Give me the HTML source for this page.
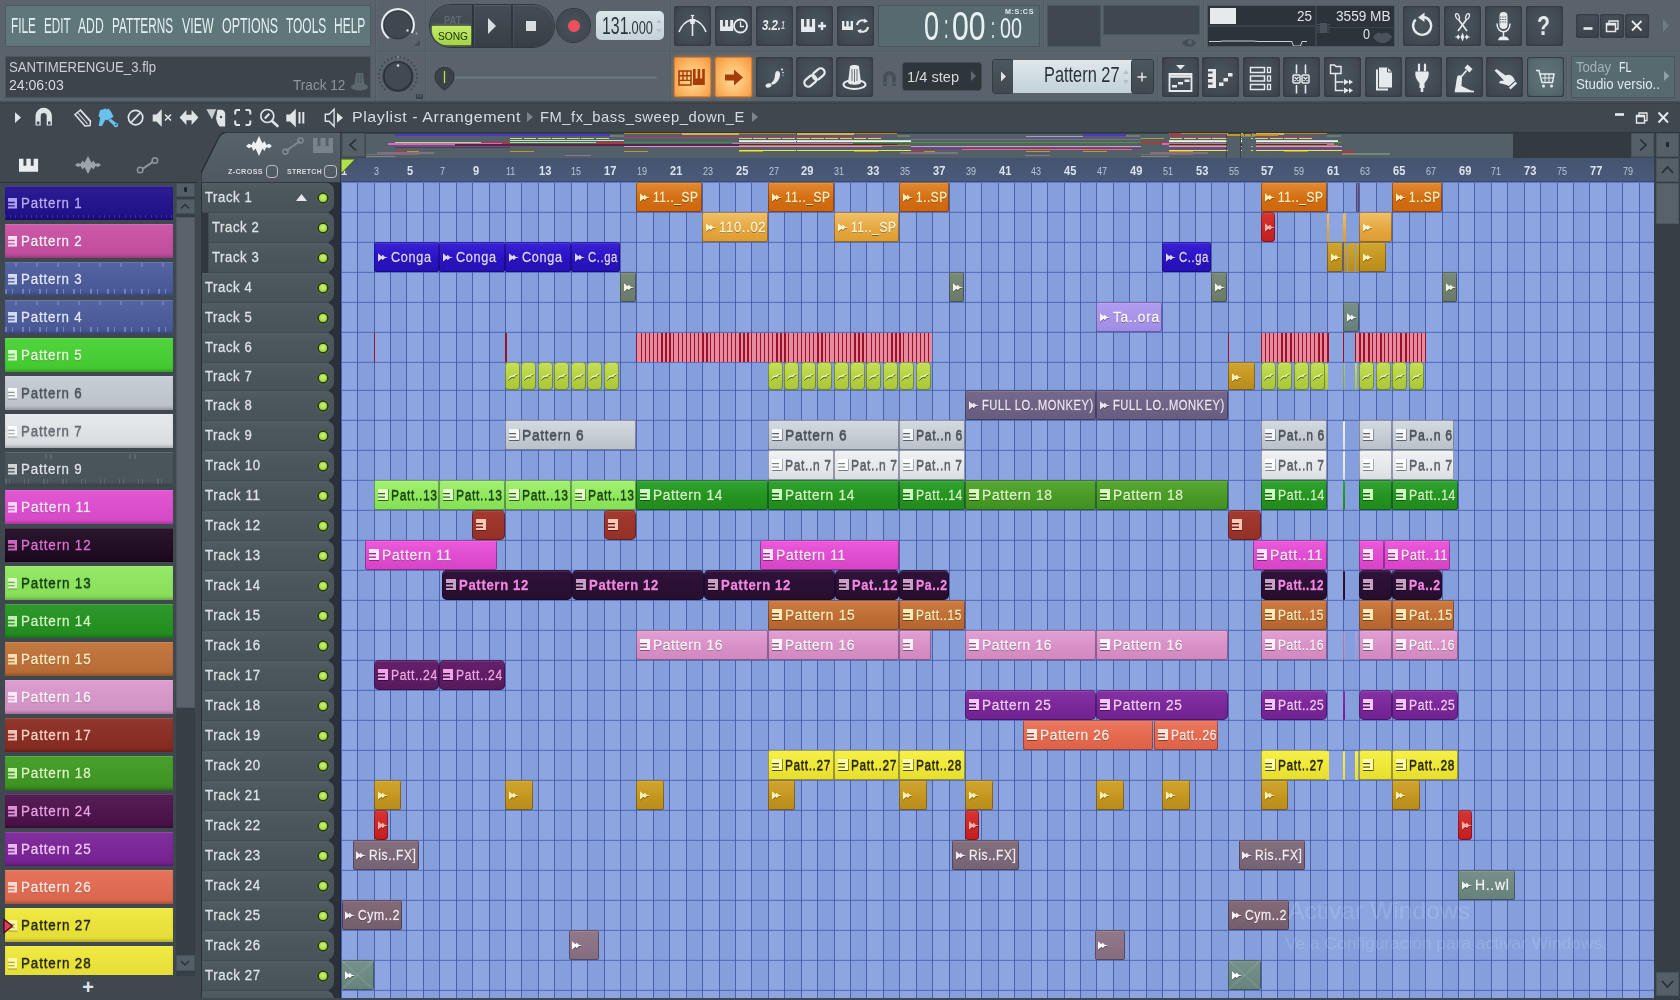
<!DOCTYPE html><html><head><meta charset="utf-8"><title>FL Studio - SANTIMERENGUE_3.flp</title><style>
*{box-sizing:border-box;margin:0;padding:0}
html,body{width:1680px;height:1000px;overflow:hidden}
body{position:relative;background:#5a636b;font-family:"Liberation Sans",sans-serif;color:#dfe5e8}
.abs{position:absolute}
.cx{display:inline-block;transform-origin:0 50%;white-space:nowrap}
/* ---- playlist window ---- */
#pl{position:absolute;left:0;top:102px;width:1680px;height:898px;background:#40484f}
#plln{position:absolute;left:0;top:181.5px;width:197px;height:1.5px;background:#2b3136}
#sep{position:absolute;left:0;top:101px;width:1680px;height:2.5px;background:linear-gradient(#48525a,#363e45);z-index:5}
#grid{position:absolute;left:341px;top:182px;width:1313px;height:816px;overflow:visible;clip-path:inset(0 0 0 -1px);background:#89a3e1}
.vl{position:absolute;top:0;width:17px;height:816px;border-left:1px solid rgba(52,72,150,.72);background:linear-gradient(90deg,rgba(0,0,70,.03),rgba(0,0,70,.03))}
.vl.od{background:linear-gradient(90deg,rgba(255,255,255,.035),rgba(255,255,255,.035))}
.vl0{position:absolute;left:-1px;top:0;width:1px;height:816px;background:#14244e;z-index:3}
.hl{position:absolute;left:0;width:1313px;height:1px;background:rgba(58,82,165,.6);box-shadow:0 -1px 0 rgba(60,85,170,.12)}
.clip{position:absolute;height:30px;border-radius:2.2px;white-space:nowrap;overflow:hidden;font-size:15.5px;line-height:29.5px;
 box-shadow:inset 0 0 0 1px rgba(0,0,40,.34), inset 0 2px 0 rgba(255,255,255,.09)}
.clip .cx{position:absolute;left:16.5px;top:0;letter-spacing:.8px;text-shadow:0 1px 0 rgba(0,0,0,.45)}
.clip svg{position:absolute;display:block;filter:drop-shadow(0 1px 0 rgba(0,0,0,.4))}
.pi{left:3.5px;top:9px;width:10px;height:11px}
.ai{left:3.5px;top:10.5px;width:10.5px;height:9px}
.yi{left:2.5px;top:11px;width:11px;height:8px;color:#f4fcc4;filter:drop-shadow(0 1.2px 0 rgba(50,60,0,.95)) !important}
.sl{padding:0;border-radius:1px;box-shadow:none}
.o5{opacity:.55}
.stp{position:absolute;top:151px;height:29px;background:#e58ba0}
.sln{position:absolute;top:151px;height:29px;background:#9c1028}
/* clip colours */
.c-or{background:linear-gradient(#e28b34,#d46e12 55%,#cd660d);color:#ffeebc}
.c-lo{background:linear-gradient(#f0c068,#e5a63e 60%,#dd9c32);color:#fff3cf}
.c-red{background:linear-gradient(#d83434,#c31c1c);color:#ffb0a8;border-radius:4px}
.c-bl{background:linear-gradient(#3a22d8,#2a14c4 50%,#2510b4);color:#ddd4ff}
.c-go{background:linear-gradient(#d0a630,#c3951f 60%,#b88c1c);color:#fff0b0}
.c-gg{background:linear-gradient(#7a8a78,#6a7a68);color:#f0f4e8}
.c-gt{background:linear-gradient(#76908a,#667f7a);color:#f0f4f0}
.c-lp{background:linear-gradient(#b09cf0,#a08ce4);color:#fbf7ff}
.c-yg{background:linear-gradient(#c6e05a,#b2d040 60%,#a8c638);color:#4c5a10;padding-left:2px;border-radius:4px}
.c-fm{background:linear-gradient(#766a8c,#685c7e);color:#ece6f4}
.c-p6{background:linear-gradient(#d4dae0,#c1c8d0 70%,#b9c0c8);color:#4b535b}
.c-p7{background:linear-gradient(#f0f2f4,#e2e6e9 70%,#d9dde1);color:#5c646c}
.c-p13{background:linear-gradient(#a4f274,#8ee65c 60%,#86de54);color:#1c4a12}
.c-p14{background:linear-gradient(#32a432,#24921f 60%,#218a1c);color:#cffac0}
.c-p18{background:linear-gradient(#58a834,#479a26 60%,#409020);color:#dcf8c0}
.c-p17{background:linear-gradient(#a53a30,#933026);color:#ffc8b8;border-radius:5px}
.c-p11{background:linear-gradient(#ea5cdc,#df4ace 60%,#d644c6);color:#ffe6fb}
.c-p12{background:linear-gradient(#30123a,#260e2e);color:#f486e4;font-weight:bold;border-radius:5px}
.c-p15{background:linear-gradient(#cc7c44,#bd6c34 60%,#b4642e);color:#ffecb8}
.c-p16{background:linear-gradient(#e2a0d2,#d78fc6 60%,#d088c0);color:#fff4fc}
.c-p24{background:linear-gradient(#66206a,#581a5c);color:#f0a4ea;border-radius:5px}
.c-p25{background:linear-gradient(#8632a6,#782698 60%,#702290);color:#f4c8fa;border-radius:5px}
.c-p26{background:linear-gradient(#ec7a60,#e3684e 60%,#dc6248);color:#ffe8e0}
.c-p27{background:linear-gradient(#f6f04a,#eee636 60%,#e6de30);color:#26280c}
.c-ris{background:linear-gradient(#84707f,#756373);color:#f4ecf4}
.c-hw{background:linear-gradient(#78908a,#66807a);color:#f0f6f4}
.c-cym{background:linear-gradient(#836a78,#755e6c);color:#f6eef2}
.c-t26{background:linear-gradient(#92788a,#846c7e);color:#fff}
.c-t27{background:linear-gradient(to top right,transparent 46%,rgba(255,255,255,.09) 50%,transparent 54%),linear-gradient(to bottom right,transparent 46%,rgba(255,255,255,.09) 50%,transparent 54%),linear-gradient(#75918a,#66837c);color:#fff}
.c-sl1{background:#7d6c9c;border-radius:1px;padding:0}
#wm{position:absolute;left:947px;top:714px;color:rgba(255,255,255,.14);font-family:"Liberation Sans",sans-serif;white-space:nowrap;z-index:4}
#wm .w1{font-size:24px;line-height:30px;transform-origin:0 50%}
#wm .w2{font-size:17px;line-height:22px;margin-top:7px;margin-left:-3px;transform-origin:0 50%}
/* ---- left panel ---- */
#plist{position:absolute;left:5px;top:182px;width:168px;height:793px;overflow:hidden}
.pat{position:absolute;left:0;width:167.5px;height:34px;font-size:15.5px;line-height:33px;white-space:nowrap;
 box-shadow:inset 0 -3px 3px -1px rgba(0,0,0,.22), inset 0 1px 0 rgba(255,255,255,.12);background-image:linear-gradient(rgba(255,255,255,.06),rgba(0,0,0,.05))}
.pat .cx{letter-spacing:1px;position:absolute;left:16.3px;top:0;text-shadow:0 1px 1px rgba(0,0,0,.3)}
.pli{position:absolute;left:2.6px;top:12px;width:9.6px;height:10.5px;color:inherit;opacity:.9}
#pladd{left:76px;top:975px;width:24px;height:24px;font-size:20px;font-weight:bold;color:#dfe5e8;line-height:24px;text-align:center}
#plsb{position:absolute;left:176px;top:183px;width:18.5px;height:793px;background:#373f46}
.sbb{position:absolute;left:0;width:19px;background:#535e66;box-shadow:inset 0 0 0 1px rgba(0,0,0,.15)}
.sbt{position:absolute;left:0;width:19px;background:#5a636b;box-shadow:inset 0 0 0 1px rgba(0,0,0,.12)}
.dot{position:absolute;left:8px;top:4px;width:3px;height:5px;background:#20262b;border-radius:1px}
#thdr{position:absolute;left:201px;top:131px;width:140px;height:52px}
.opt{font-size:7.4px;font-weight:bold;color:#d5dbde;letter-spacing:.4px;line-height:9px;height:9px;white-space:nowrap;transform-origin:0 50%}
.ck{display:block;width:12.5px;height:12.5px;border:1.4px solid #b8c0c5;border-radius:4px}
#tracks{position:absolute;left:201px;top:183px;width:140px;height:815px;overflow:hidden;background:linear-gradient(90deg,#2a3036 0,#2a3036 1px,#414b52 1px,#414b52 128px,#2b3137 128px)}
.trk{position:absolute;left:1px;width:132px;height:29px;background:linear-gradient(#515c63,#4b565d 30%,#475259);border-radius:0 8px 8px 0;font-size:15.5px;line-height:27px;color:#dde2e5;white-space:nowrap}
.trk .cx{position:absolute;left:3.4px;top:0;letter-spacing:.7px}
.trk.ind{left:8px;width:125px}
.trk.ind .cx{left:3px}
.led{position:absolute;right:7px;top:10.5px;width:8px;height:8px;border-radius:50%;background:radial-gradient(circle at 50% 40%,#d0f47a,#a6dc44 60%,#8cc630);box-shadow:0 0 0 1.8px #2a3a16,0 0 0 2.6px rgba(120,150,90,.35)}
.grp{position:absolute;left:0;top:30px;width:7px;height:60px;background:#30373d}
/* ---- title bar ---- */
#ttl{position:absolute;left:0;top:102px;width:1680px;height:30px;background:#40484f}
#ttl:after{content:'';position:absolute;left:341px;top:30px;width:1339px;height:1.5px;background:#2e353b}
.ttx{font-size:14.5px;color:#d6dcdf;letter-spacing:.5px;line-height:20px;white-space:nowrap;transform-origin:0 50%}
.tri{display:block;width:0;height:0;border-left:6px solid #7b858b;border-top:5px solid transparent;border-bottom:5px solid transparent}
/* overview */
.sbb2{position:absolute;top:133px;width:23px;height:24px;background:#545f67;box-shadow:inset 0 0 0 1px rgba(0,0,0,.12)}
#ov{position:absolute;left:366px;top:133px;width:1147px;height:25px;background:#546067;overflow:hidden;box-shadow:inset 0 1px 0 #3a4249}
#ov i{position:absolute;display:block}
#ov b{position:absolute;top:0;width:1px;height:25px;background:rgba(20,25,30,.4)}
#ovd{position:absolute;left:1513px;top:133px;width:118px;height:25px;background:#333b41}
#ruler{position:absolute;left:341px;top:158px;width:1313px;height:24px;background:linear-gradient(#44536f,#4a5a7a);overflow:hidden;border-bottom:1px solid #3d4c6e}
#ruler span{position:absolute;top:0;line-height:25px;color:#cfd6e4;transform-origin:0 50%;transform:scaleX(.82);white-space:nowrap}
.rb{font-size:13.5px;font-weight:bold;color:#dde3ee !important}
.rs{font-size:11px;line-height:27px !important;color:#bcc5d6 !important}
#rsb{position:absolute;left:1654px;top:133px;width:26px;height:867px;background:#384047;background-image:repeating-linear-gradient(135deg,rgba(0,0,0,.08) 0,rgba(0,0,0,.08) 1px,transparent 1px,transparent 2.8px)}
/* ---- toolbar ---- */
#tb{position:absolute;left:0;top:0;width:1680px;height:102px;background:#5a636b;overflow:hidden}
.t{position:absolute;white-space:nowrap;transform-origin:0 50%;display:block}
.vs{position:absolute;width:2px;background:linear-gradient(90deg,#4c565d,#626d75)}
.hs{position:absolute;height:2px;background:linear-gradient(#4c565d,#626d75)}
#menu{left:6px;top:6px;width:364px;height:39.5px;background:#5f767b;box-shadow:0 0 0 1px #4d5960}
#hint{left:6px;top:56.5px;width:364px;height:40px;background:#3d444b;box-shadow:0 0 0 1px #4c565d}
#trans{left:430px;top:5px;width:124px;height:42px;border-radius:21px;background:linear-gradient(#444d55,#373f46);box-shadow:0 0 0 1px #30373d, inset 0 1px 0 rgba(255,255,255,.08);overflow:hidden}
#trans i{position:absolute;top:0;width:1.5px;height:42px;background:#2e353b;box-shadow:1px 0 0 rgba(255,255,255,.06)}
#pat{position:absolute;left:0;top:0;width:42px;height:22px;background:linear-gradient(#485159,#3f4850)}
#song{position:absolute;left:2px;top:21px;width:39px;height:19px;background:linear-gradient(#c4ea6a,#a4d544);border-radius:0 0 0 14px;box-shadow:0 0 4px rgba(180,230,90,.6)}
#rec{left:557px;top:9px;width:33px;height:33px;border-radius:50%;background:radial-gradient(#4a545b,#3b434a);box-shadow:0 0 0 1px #30373d}
#rec i{position:absolute;left:10.5px;top:10.5px;width:12px;height:12px;border-radius:50%;background:#f0505c}
#tempo{left:596px;top:11px;width:68px;height:29px;border-radius:5px;background:linear-gradient(#dbe5ea,#c5d2d9)}
.tbn{position:absolute;border-radius:3px;background:radial-gradient(ellipse at 50% 45%,#4b555d 0,#424b53 55%,#3a4249 100%);box-shadow:inset 0 0 0 1px #363e45, inset 0 0 3px rgba(0,0,0,.35)}
.tbn svg{display:block}
.tbn.on{background:radial-gradient(ellipse at 50% 55%,#ffdf9e 0,#ffbe6c 45%,#f3923a 100%);box-shadow:inset 0 0 0 1px #e07e2c, 0 0 4px rgba(255,150,60,.55)}
.tbn.teal{background:radial-gradient(ellipse at 50% 45%,#5e7478 0,#566a6f 60%,#4d5f64 100%)}
.tbn2{background:linear-gradient(#4c565e,#40494f);box-shadow:0 0 0 1px #353d44;border-radius:3px}
.wb{background:linear-gradient(#454e56,#3b434a)}
#time{left:878.5px;top:5.5px;width:160.5px;height:40px;background:#566a70;box-shadow:0 0 0 1px #4a565d}
.dk{background:#3f4850;box-shadow:0 0 0 1px #4c565d}
#snap{left:902.5px;top:63px;width:78.5px;height:26.5px;background:#2e353b;border-radius:3px;box-shadow:0 0 0 1px #434c53}
#patsel{left:1013px;top:60px;width:119px;height:33px;background:linear-gradient(#dfe8ec,#c4d1d8)}
#cpu{left:1208px;top:5.5px;width:186px;height:40px;background:#2c333a;box-shadow:0 0 0 1px #4c565d;overflow:hidden}
#cpu .bar{position:absolute;left:1.5px;top:2.5px;width:26px;height:16px;background:#e6eaed}
#cpu .dv{position:absolute;left:107px;top:0;width:1.5px;height:40px;background:#3b434a}
#cpu .dh1{position:absolute;left:0;top:19.5px;width:107px;height:1.5px;background:#3b434a}
#cpu .dh2{position:absolute;left:108px;top:21px;width:78px;height:1.5px;background:#3b434a}
#news{left:1571.5px;top:56.5px;width:102px;height:40px;background:#566a70;box-shadow:0 0 0 1px #4a565d}
.c-p6 .pi{color:#f4f6f8;filter:drop-shadow(0 1px 0 rgba(60,70,80,.7)) drop-shadow(1px 0 0 rgba(60,70,80,.45))}
.c-p7 .pi{color:#ffffff;filter:drop-shadow(0 1px 0 rgba(70,80,90,.6)) drop-shadow(1px 0 0 rgba(70,80,90,.4))}
.c-p13 .pi{color:#e6ffcc;filter:drop-shadow(0 1px 0 rgba(30,80,20,.8)) drop-shadow(1px 0 0 rgba(30,80,20,.5))}
.c-p27 .pi{color:#fffcae;filter:drop-shadow(0 1px 0 rgba(60,60,10,.85)) drop-shadow(1px 0 0 rgba(60,60,10,.55))}
.c-p12 .pi{color:#c9a0c4}
.clip .cx,.pat .cx,.trk .cx{-webkit-text-stroke:.3px currentColor}
.p0{background-image:repeating-linear-gradient(90deg,rgba(110,100,220,.4) 0,rgba(110,100,220,.4) 1px,transparent 1px,transparent 5.2px),linear-gradient(rgba(255,255,255,.06),rgba(0,0,0,.05)) !important;background-size:100% 3px,auto !important;background-position:0 29px,0 0 !important;background-repeat:no-repeat !important}
.p2,.p3{background-image:repeating-linear-gradient(90deg,rgba(130,150,215,.7) 0,rgba(130,150,215,.7) 2px,transparent 2px,transparent 7px,rgba(130,150,215,.7) 7px,rgba(130,150,215,.7) 8.5px,transparent 8.5px,transparent 17px),repeating-linear-gradient(90deg,transparent 0,transparent 10px,rgba(120,140,205,.6) 10px,rgba(120,140,205,.6) 12px,transparent 12px,transparent 21px),linear-gradient(rgba(255,255,255,.06),rgba(0,0,0,.05)) !important;background-size:100% 5px,100% 4px,auto !important;background-position:0 27px,0 1px,0 0 !important;background-repeat:no-repeat !important}
.p7{background-image:repeating-linear-gradient(90deg,rgba(110,122,130,.55) 0,rgba(110,122,130,.55) 1.5px,transparent 1.5px,transparent 4px,rgba(110,122,130,.55) 4px,rgba(110,122,130,.55) 5px,transparent 5px,transparent 19px),repeating-linear-gradient(90deg,transparent 0,transparent 40px,rgba(110,122,130,.5) 40px,rgba(110,122,130,.5) 42px,transparent 42px,transparent 45px,rgba(110,122,130,.5) 45px,rgba(110,122,130,.5) 47px,transparent 47px,transparent 84px) !important;background-size:100% 5px,100% 5px !important;background-position:0 27px,0 2px !important;background-repeat:no-repeat !important}
.p5 .pli,.p6 .pli{color:#fff}.p10 .pli{color:#e8ffd4}.p19 .pli,.p20 .pli{color:#fffcb4}
.p5 .pli,.p6 .pli,.p10 .pli,.p19 .pli,.p20 .pli{filter:drop-shadow(0 1px 0 rgba(0,0,0,.35))}

</style></head><body>
<div id="tb">
<i class="vs" style="left:425px;top:0;height:101px"></i><i class="vs" style="left:670px;top:0;height:101px"></i><i class="vs" style="left:1043px;top:0;height:52px"></i><i class="vs" style="left:1203px;top:0;height:52px"></i><i class="vs" style="left:1398px;top:0;height:52px"></i><i class="vs" style="left:1157px;top:52px;height:49px"></i><i class="vs" style="left:1566px;top:52px;height:49px"></i><i class="vs" style="left:375px;top:0;height:101px"></i>
<i class="hs" style="left:375px;top:51px;width:1305px"></i>
<div class="abs" id="menu"></div>
<span class="t" style="left:10.7px;top:15.0px;font-size:22px;line-height:22px;color:#e4f0f0;transform:scaleX(0.538);">FILE</span>
<span class="t" style="left:44.3px;top:15.0px;font-size:22px;line-height:22px;color:#e4f0f0;transform:scaleX(0.533);">EDIT</span>
<span class="t" style="left:78.3px;top:15.0px;font-size:22px;line-height:22px;color:#e4f0f0;transform:scaleX(0.553);">ADD</span>
<span class="t" style="left:112.3px;top:15.0px;font-size:22px;line-height:22px;color:#e4f0f0;transform:scaleX(0.535);">PATTERNS</span>
<span class="t" style="left:181.7px;top:15.0px;font-size:22px;line-height:22px;color:#e4f0f0;transform:scaleX(0.562);">VIEW</span>
<span class="t" style="left:222.3px;top:15.0px;font-size:22px;line-height:22px;color:#e4f0f0;transform:scaleX(0.566);">OPTIONS</span>
<span class="t" style="left:285.7px;top:15.0px;font-size:22px;line-height:22px;color:#e4f0f0;transform:scaleX(0.543);">TOOLS</span>
<span class="t" style="left:334.3px;top:15.0px;font-size:22px;line-height:22px;color:#e4f0f0;transform:scaleX(0.546);">HELP</span>
<div class="abs" id="hint"></div>
<span class="t" style="left:9.3px;top:60.3px;font-size:14.5px;line-height:14.5px;color:#c9cfd3;transform:scaleX(0.908);">SANTIMERENGUE_3.flp</span>
<span class="t" style="left:9.3px;top:78.0px;font-size:14.5px;line-height:14.5px;color:#d5dadd;transform:scaleX(0.969);">24:06:03</span>
<span class="t" style="left:293.3px;top:78.0px;font-size:14.5px;line-height:14.5px;color:#8d979d;transform:scaleX(0.938);">Track 12</span>
<svg class="abs" style="left:351px;top:72px" width="17" height="20" viewBox="0 0 17 20"><path d="M5 1h7l1.5 11c2 .5 3.5 1.5 3.5 3 0 2-3.800 3.500-8.5 3.500S0 17 0 15c0-1.5 1.500-2.5 3.500-3z" fill="#5d676e"/><path d="M7 2v9M10 2v9" stroke="#4a545b" stroke-width="1"/></svg>
<svg class="abs" style="left:380px;top:5px" width="44" height="44" viewBox="0 0 44 44"><circle cx="18" cy="20" r="14" fill="#3f4850" stroke="#2d343a" stroke-width="1"/><path d="M8.800 33.200A16 16 0 1 1 31.800 28" fill="none" stroke="#e8ecee" stroke-width="2"/><circle cx="27.5" cy="25.5" r="1.200" fill="#cfd5d8"/><circle cx="36.5" cy="28.5" r=".9" fill="#aeb6bb"/><path d="M34 41l6-6v6z" fill="#444d55"/></svg>
<svg class="abs" style="left:378px;top:54px" width="46" height="46" viewBox="0 0 46 46"><circle cx="6.6" cy="35.4" r=".9" fill="#3a4249"/><circle cx="3.9" cy="32.1" r=".9" fill="#3a4249"/><circle cx="2.1" cy="28.3" r=".9" fill="#3a4249"/><circle cx="1.1" cy="24.1" r=".9" fill="#3a4249"/><circle cx="1.1" cy="19.9" r=".9" fill="#3a4249"/><circle cx="2.1" cy="15.7" r=".9" fill="#3a4249"/><circle cx="3.9" cy="11.9" r=".9" fill="#3a4249"/><circle cx="6.6" cy="8.6" r=".9" fill="#3a4249"/><circle cx="9.9" cy="5.9" r=".9" fill="#3a4249"/><circle cx="13.7" cy="4.1" r=".9" fill="#3a4249"/><circle cx="17.9" cy="3.1" r=".9" fill="#3a4249"/><circle cx="22.1" cy="3.1" r=".9" fill="#3a4249"/><circle cx="26.3" cy="4.1" r=".9" fill="#3a4249"/><circle cx="30.1" cy="5.9" r=".9" fill="#3a4249"/><circle cx="33.4" cy="8.6" r=".9" fill="#3a4249"/><circle cx="36.1" cy="11.9" r=".9" fill="#3a4249"/><circle cx="37.9" cy="15.7" r=".9" fill="#3a4249"/><circle cx="38.9" cy="19.9" r=".9" fill="#3a4249"/><circle cx="38.9" cy="24.1" r=".9" fill="#3a4249"/><circle cx="37.9" cy="28.3" r=".9" fill="#3a4249"/><circle cx="36.1" cy="32.1" r=".9" fill="#3a4249"/><circle cx="33.4" cy="35.4" r=".9" fill="#3a4249"/><circle cx="20" cy="3" r="1.100" fill="#8a949a"/><circle cx="20" cy="22.5" r="15.5" fill="#333b42"/><circle cx="20" cy="22" r="14" fill="#414a52" stroke="#2a3137" stroke-width="1.200"/><circle cx="20" cy="11.5" r="1.300" fill="#d5dadd"/><path d="M38 40v5h7v-5h-1.500v3h-1.200v-3h-1.600v3h-1.200v-3z" fill="#3a4249"/></svg>
<div class="abs" id="trans"><div id="pat"></div><div id="song"></div><i style="left:42px"></i><i style="left:81px"></i></div>
<span class="t" style="left:443.5px;top:15.4px;font-size:11px;line-height:11px;color:#5f6a72;font-weight:bold;transform:scaleX(0.859);">PAT</span>
<span class="t" style="left:437.5px;top:31.0px;font-size:11.5px;line-height:11.5px;color:#1c3008;transform:scaleX(0.886);">SONG</span>
<svg class="abs" style="left:486px;top:16px" width="12" height="20" viewBox="0 0 12 20"><path d="M2 2l8 8-8 8z" fill="#d9dee1"/></svg>
<div class="abs" style="left:526px;top:21px;width:10px;height:10px;background:#d9dee1"></div>
<div class="abs" id="rec"><i></i></div>
<div class="abs" id="tempo"></div>
<span class="t" style="left:601.5px;top:14.1px;font-size:24px;line-height:24px;color:#2c343b;transform:scaleX(0.662);">131</span>
<span class="t" style="left:628.0px;top:19.5px;font-size:17.5px;line-height:17.5px;color:#2c343b;transform:scaleX(0.734);">.000</span>
<svg class="abs" style="left:655px;top:17px" width="8" height="18" viewBox="0 0 8 18"><path d="M1 6l3-4 3 4zM1 12l3 4 3-4z" fill="#b9c4cb"/></svg>
<div class="abs" style="left:452px;top:75.5px;width:205px;height:3px;border-radius:2px;background:#67727a"></div>
<svg class="abs" style="left:434px;top:66px" width="22" height="26" viewBox="0 0 22 26"><path d="M10.5 1.500c5.5 0 9.5 3.5 9.5 9 0 5-4 10-9.5 13.500C5 20.5 1 15.5 1 10.500c0-5.5 4-9 9.500-9z" fill="#3a4248" stroke="#2b3237" stroke-width="1"/><path d="M10.5 5v12" stroke="#b8e05a" stroke-width="1.300"/></svg>
<div class="tbn" style="left:674px;top:5.5px;width:37px;height:40px"><svg width="37" height="40" viewBox="0 0 37 40"><path d="M5 26C8 18 13 15 17 14M32 26C29 18 24 15 20 14" fill="none" stroke="#e6eaed" stroke-width="1.600"/><path d="M18.5 9v21" stroke="#e6eaed" stroke-width="1.600"/><path d="M15.5 13h6l-1 5h-4z" fill="#e6eaed"/><path d="M16.800 9.500h3.400" stroke="#e6eaed" stroke-width="1.200"/></svg></div>
<div class="tbn" style="left:715px;top:5.5px;width:37px;height:40px"><svg width="37" height="40" viewBox="0 0 37 40"><path d="M5 14h2.9v6.6h2.2v-6.6h2.9v6.6h2.2v-6.6h2.9v11h-13z" fill="#e6eaed"/><circle cx="25.5" cy="20" r="6.5" fill="#3f4850" stroke="#e6eaed" stroke-width="1.800"/><path d="M25.5 15.500v5h3.5" fill="none" stroke="#e6eaed" stroke-width="1.300"/></svg></div>
<div class="tbn" style="left:756px;top:5.5px;width:37px;height:40px"><svg width="37" height="40" viewBox="0 0 37 40"></svg></div>
<div class="tbn" style="left:796px;top:5.5px;width:37px;height:40px"><svg width="37" height="40" viewBox="0 0 37 40"><path d="M5 13h3.1v7.8h2.4v-7.8h3.1v7.8h2.4v-7.8h3.1v13h-14z" fill="#e6eaed"/><path d="M22 20h8M26 16v8" stroke="#e6eaed" stroke-width="2.400"/></svg></div>
<div class="tbn" style="left:837px;top:5.5px;width:37px;height:40px"><svg width="37" height="40" viewBox="0 0 37 40"><path d="M5 15h2.4v5.4h1.9v-5.4h2.4v5.4h1.9v-5.4h2.4v9h-11z" fill="#e6eaed"/><path d="M20 19a5.5 5.5 0 0 1 9-3.500M31 21a5.5 5.5 0 0 1-9 3.5" fill="none" stroke="#e6eaed" stroke-width="2"/><path d="M27.5 12.500l3.5 3-4.5 1.500zM23.5 27.500l-3.500-3 4.500-1.500z" fill="#e6eaed"/></svg></div>
<span class="t" style="left:761.5px;top:16.6px;font-size:15.5px;line-height:15.5px;color:#e6eaed;font-weight:bold;transform:scaleX(0.735);font-style:italic;">3.2.</span>
<span class="t" style="left:781.0px;top:21.2px;font-size:10px;line-height:10px;color:#c6ccd0;font-weight:bold;transform:scaleX(0.719);font-style:italic;">1</span>
<div class="tbn on" style="left:674px;top:56.5px;width:37px;height:40px"><svg width="37" height="40" viewBox="0 0 37 40"><path d="M5 14h12v14h-12z" fill="none" stroke="#a63c08" stroke-width="1.600"/><path d="M9 14v10M13 14v10M5 18.700h12M5 23.400h12" stroke="#a63c08" stroke-width="1.400"/><path d="M19 12h2.6v9.6h2.0v-9.6h2.6v9.6h2.0v-9.6h2.6v16h-12z" fill="#a63c08"/></svg></div>
<div class="tbn on" style="left:715px;top:56.5px;width:37px;height:40px"><svg width="37" height="40" viewBox="0 0 37 40"><path d="M10 17.500h9v-5l9 8-9 8v-5h-9z" fill="#a63c08"/></svg></div>
<div class="tbn" style="left:756px;top:56.5px;width:37px;height:40px"><svg width="37" height="40" viewBox="0 0 37 40"><path d="M21.5 14c2.5 0 3 3 2.200 6-1 3.500-3.5 6.500-6.5 7.500-1.500.5-2.500-.5-1.500-2 2.500-2 3-4.5 3.300-7.500.3-2.5 1-4 2.500-4z" fill="#e6eaed"/><ellipse cx="12.5" cy="28.5" rx="3" ry="2" fill="#e6eaed" transform="rotate(-15 12.5 28.500)"/><circle cx="26" cy="12.5" r="1.100" fill="#e6eaed"/><circle cx="27" cy="15.5" r=".8" fill="#e6eaed"/><circle cx="27" cy="18" r=".6" fill="#e6eaed"/></svg></div>
<div class="tbn" style="left:796px;top:56.5px;width:37px;height:40px"><svg width="37" height="40" viewBox="0 0 37 40"><g fill="none" stroke="#e6eaed" stroke-width="2.300" transform="rotate(-40 18.5 20.500)"><rect x="6.5" y="16.5" width="13" height="8" rx="4"/><rect x="17.5" y="16.5" width="13" height="8" rx="4"/></g></svg></div>
<div class="tbn" style="left:836px;top:56.5px;width:37px;height:40px"><svg width="37" height="40" viewBox="0 0 37 40"><ellipse cx="18.5" cy="27.5" rx="11" ry="4.5" fill="none" stroke="#e6eaed" stroke-width="2"/><path d="M14 9.500c0-2 9-2 9 0l2 16c0 3-13 3-13 0z" fill="#e6eaed"/><path d="M16 12v12M18.5 12v13M21 12v12" stroke="#5a646b" stroke-width=".9"/></svg></div>
<div class="abs" id="time"></div>
<span class="t" style="left:923.5px;top:5.5px;font-size:41px;line-height:41px;color:#e6f1f3;transform:scaleX(0.658);">0</span>
<span class="t" style="left:943.5px;top:8.8px;font-size:34px;line-height:34px;color:#e6f1f3;transform:scaleX(0.476);">:</span>
<span class="t" style="left:952.0px;top:5.5px;font-size:41px;line-height:41px;color:#e6f1f3;transform:scaleX(0.735);">00</span>
<span class="t" style="left:991.0px;top:12.6px;font-size:30px;line-height:30px;color:#e6f1f3;transform:scaleX(0.480);">:</span>
<span class="t" style="left:1000.0px;top:13.9px;font-size:29px;line-height:29px;color:#e6f1f3;transform:scaleX(0.682);">00</span>
<span class="t" style="left:1005.0px;top:8.3px;font-size:7.5px;line-height:7.5px;color:#dfe9eb;font-weight:bold;letter-spacing:0.6px;transform:scaleX(0.958);">M:S:CS</span>
<div class="abs dk" style="left:1048px;top:5.5px;width:52px;height:40px"></div><div class="abs dk" style="left:1103.5px;top:5.5px;width:95.5px;height:28px"></div>
<svg class="abs" style="left:1182px;top:37px" width="14" height="11" viewBox="0 0 14 11"><path d="M0 6C3 1 11 1 14 6 11 11 3 11 0 6z" fill="#454e56"/><circle cx="8" cy="5" r="2.200" fill="#59646c"/></svg>
<svg class="abs" style="left:882px;top:70px" width="15" height="17" viewBox="0 0 15 17"><path d="M1 16V7.500a6.5 6.5 0 0 1 13 0V16h-4V7.500a2.5 2.5 0 0 0-5 0V16z" fill="#475058"/><path d="M1 13h4M10 13h4" stroke="#59646c" stroke-width="1"/></svg>
<div class="abs" id="snap"></div>
<span class="t" style="left:907.0px;top:69.5px;font-size:14.5px;line-height:14.5px;color:#d5dadd;transform:scaleX(1.008);">1/4 step</span>
<svg class="abs" style="left:971px;top:71px" width="6" height="10" viewBox="0 0 6 10"><path d="M0 0l5 5-5 5z" fill="#5f6a72"/></svg>
<div class="abs tbn2" style="left:992.5px;top:60px;width:20.5px;height:33px"><svg width="20" height="33" viewBox="0 0 20 33"><path d="M8 11.500l5 5-5 5z" fill="#dfe4e7"/></svg></div>
<div class="abs" id="patsel"></div>
<span class="t" style="left:1043.7px;top:65.2px;font-size:21.5px;line-height:21.5px;color:#2a3239;transform:scaleX(0.761);">Pattern 27</span>
<svg class="abs" style="left:1122px;top:67px" width="8" height="20" viewBox="0 0 8 20"><path d="M1 7l3-4 3 4zM1 13l3 4 3-4z" fill="#b4c0c8"/></svg>
<div class="abs tbn2" style="left:1132px;top:60px;width:20.5px;height:33px"><svg width="20" height="33" viewBox="0 0 20 33"><path d="M5.5 17h9M10 12.500v9" stroke="#e6eaed" stroke-width="1.400"/></svg></div>
<div class="tbn" style="left:1161.5px;top:56.5px;width:37px;height:40px"><svg width="37" height="40" viewBox="0 0 37 40"><path d="M14 8h9l-4.5 4.500z" fill="#e6eaed"/><path d="M7.5 17h22v17h-22z" fill="none" stroke="#e6eaed" stroke-width="1.800"/><path d="M7.5 19.500h22" stroke="#e6eaed" stroke-width="2.5"/><path d="M10 28h5v2.500h-5zM16 25h5v2.500h-5zM22.5 22.500h5v2.500h-5z" fill="#e6eaed"/></svg></div>
<div class="tbn" style="left:1202px;top:56.5px;width:37px;height:40px"><svg width="37" height="40" viewBox="0 0 37 40"><path d="M6 12h8v19h-8v-3.500h4.500v-2h-4.500v-3.500h4.500v-2h-4.500v-3.500h4.500v-2h-4.500z" fill="#e6eaed"/><path d="M17 25.500h4.500v3.500h-4.500zM21.5 21h4.500v3.500h-4.500zM26 16h4.500v3.500h-4.500z" fill="#e6eaed"/></svg></div>
<div class="tbn" style="left:1242.7px;top:56.5px;width:37px;height:40px"><svg width="37" height="40" viewBox="0 0 37 40"><rect x="7.5" y="10.5" width="14" height="5" fill="none" stroke="#e6eaed" stroke-width="1.5"/><rect x="24.5" y="10.5" width="3" height="5" fill="none" stroke="#e6eaed" stroke-width="1.300"/><rect x="7.5" y="19" width="14" height="5" fill="none" stroke="#e6eaed" stroke-width="1.5"/><rect x="24.5" y="19" width="3" height="5" fill="none" stroke="#e6eaed" stroke-width="1.300"/><rect x="7.5" y="27.5" width="14" height="5" fill="none" stroke="#e6eaed" stroke-width="1.5"/><rect x="24.5" y="27.5" width="3" height="5" fill="none" stroke="#e6eaed" stroke-width="1.300"/></svg></div>
<div class="tbn" style="left:1283.3px;top:56.5px;width:37px;height:40px"><svg width="37" height="40" viewBox="0 0 37 40"><path d="M13.5 7.500v9M13.5 28v8.500M22.5 7.500v9M22.5 28v8.5" stroke="#e6eaed" stroke-width="1.600"/><rect x="10" y="18" width="7" height="8" rx="1" fill="none" stroke="#e6eaed" stroke-width="1.5"/><rect x="19" y="18" width="7" height="8" rx="1" fill="none" stroke="#e6eaed" stroke-width="1.5"/><path d="M11.5 20l4 4m0-4l-4 4M20.5 20l4 4m0-4l-4 4" stroke="#e6eaed" stroke-width="1.100"/></svg></div>
<div class="tbn" style="left:1324px;top:56.5px;width:37px;height:40px"><svg width="37" height="40" viewBox="0 0 37 40"><path d="M6.5 8h4l1.5 1.500h5v7h-10.500z" fill="none" stroke="#e6eaed" stroke-width="1.400"/><path d="M11.5 17v16.500h8M11.5 25h8" fill="none" stroke="#e6eaed" stroke-width="1.5"/><path d="M20 22l5 3-5 3zM25 22.500l4 2.500-4 2.500zM20 30.500l5 3-5 3zM25 31l4 2.500-4 2.500z" fill="#e6eaed"/></svg></div>
<div class="tbn" style="left:1364.5px;top:56.5px;width:37px;height:40px"><svg width="37" height="40" viewBox="0 0 37 40"><path d="M11 12.500h2v19h10v2h-12z" fill="#e6eaed"/><path d="M14 10.500h8.500l4.5 4.500v15.500h-13z" fill="#e6eaed"/><path d="M22.5 10.500v4.500h4.5" fill="none" stroke="#49535b" stroke-width="1"/></svg></div>
<div class="tbn" style="left:1405px;top:56.5px;width:37px;height:40px"><svg width="37" height="40" viewBox="0 0 37 40"><path d="M14 7.500v6M20 7.500v6" stroke="#e6eaed" stroke-width="2.200" stroke-linecap="round"/><path d="M10.5 14.500h13c1 5-1.5 9-4 11.500v5h-1.200v4h-2.600v-4h-1.200v-5c-2.500-2.500-5-6.500-4-11.500z" fill="#e6eaed"/></svg></div>
<div class="tbn" style="left:1445.7px;top:56.5px;width:37px;height:40px"><svg width="37" height="40" viewBox="0 0 37 40"><path d="M21.5 7.500l5 4.500-3 3.500-5-4.500z" fill="#e6eaed"/><path d="M20.5 13.500l-6 7" stroke="#e6eaed" stroke-width="1.800"/><path d="M11.5 19c2-1.5 4.500-.5 4.5 2l-.5 8 11.5 5.500h-18.500c1.500-4 1.500-11 3-15.500z" fill="#e6eaed"/><path d="M9 34.500h19" stroke="#e6eaed" stroke-width="1.600"/></svg></div>
<div class="tbn" style="left:1486.3px;top:56.5px;width:37px;height:40px"><svg width="37" height="40" viewBox="0 0 37 40"><path d="M8.5 13.500l2-1.5 9 6.500c2-1.5 5.500-1 7.5 1.500l2 3.500-6 5.500-4-1.500-6-1.5 1-2 4-.500z" fill="#e6eaed"/><path d="M23 30.500l6.500-6 1.5 2-6.5 6z" fill="#e6eaed"/></svg></div>
<div class="tbn teal" style="left:1527px;top:56.5px;width:37px;height:40px"><svg width="37" height="40" viewBox="0 0 37 40"><path d="M9 13.500h3l3 12h10.500l1.500-8.500h-14" fill="none" stroke="#e6eaed" stroke-width="1.5"/><path d="M15 21h12M18 17v8.500M22 17v8.5" stroke="#e6eaed" stroke-width="1"/><circle cx="16.5" cy="29" r="1.5" fill="#e6eaed"/><circle cx="24.5" cy="29" r="1.5" fill="#e6eaed"/></svg></div>
<div class="abs" id="cpu"><i class="bar"></i><i class="dv"></i><i class="dh1"></i><i class="dh2"></i><svg class="abs" style="left:0;top:22px" width="108" height="18" viewBox="0 0 108 18"><path d="M1 13.500h10l4-.5h30l6 .5h33v.5l1.5 4h7l1.500-4.500h5" fill="none" stroke="#c9d0d4" stroke-width="1"/></svg><svg class="abs" style="left:109px;top:16px" width="13" height="12" viewBox="0 0 13 12"><path d="M3 1h7v10h-7z" fill="#4a535b"/><path d="M0 2.500h13M0 5h13M0 7.500h13M0 10h13" stroke="#4a535b" stroke-width="1"/></svg><svg class="abs" style="left:165px;top:26px" width="19" height="11" viewBox="0 0 19 11"><path d="M0 5c2-3 4.500-5 7-4 1.500.5 3.500.5 5 0 2.500-1 5 1 7 4-2.5 4-6 6-9.5 6S2.5 9 0 5z" fill="#4a535b"/></svg></div>
<span class="t" style="left:1297.0px;top:8.1px;font-size:15px;line-height:15px;color:#dfe4e7;transform:scaleX(0.899);">25</span>
<span class="t" style="left:1336.0px;top:8.1px;font-size:15px;line-height:15px;color:#dfe4e7;transform:scaleX(0.908);">3559 MB</span>
<span class="t" style="left:1362.5px;top:26.1px;font-size:15px;line-height:15px;color:#dfe4e7;transform:scaleX(0.839);">0</span>
<div class="tbn" style="left:1402.5px;top:5.5px;width:37px;height:40px"><svg width="37" height="40" viewBox="0 0 37 40"><path d="M12.700 13.500A9 9 0 1 0 21 11" fill="none" stroke="#e6eaed" stroke-width="2.400"/><path d="M21.5 6.500v9.500l-6.500-4.500z" fill="#e6eaed"/></svg></div>
<div class="tbn" style="left:1443.5px;top:5.5px;width:37px;height:40px"><svg width="37" height="40" viewBox="0 0 37 40"><path d="M14.5 13.500L23 25M22.5 13.500L14 25" stroke="#e6eaed" stroke-width="1.700"/><ellipse cx="13.5" cy="10.5" rx="1.700" ry="3" fill="none" stroke="#e6eaed" stroke-width="1.300" transform="rotate(-20 13.5 10.500)"/><ellipse cx="23.5" cy="10.5" rx="1.700" ry="3" fill="none" stroke="#e6eaed" stroke-width="1.300" transform="rotate(20 23.5 10.500)"/><path d="M10.5 31l2.500-.8 1.200-2 1.200 2 1.300.8 1.800-4.5 1.800 4.5 1.300-.8 1.200-2 1.200 2 2.500.8-2.500.8-1.200 2-1.200-2-1.300-.8-1.800 4.500-1.800-4.500-1.300.8-1.200 2-1.200-2z" fill="#e6eaed"/></svg></div>
<div class="tbn" style="left:1484.5px;top:5.5px;width:37px;height:40px"><svg width="37" height="40" viewBox="0 0 37 40"><rect x="14.5" y="6" width="8" height="17" rx="4" fill="#e6eaed"/><path d="M15 11h7M15 13.500h7M15 16h7" stroke="#49535b" stroke-width="1" stroke-dasharray="1.300 1"/><path d="M12 17.500c0 11 13 11 13 0" fill="none" stroke="#e6eaed" stroke-width="1.5"/><path d="M18.5 26v4.500M14 33.500c1-3.5 8-3.5 9 0z" stroke="#e6eaed" stroke-width="1.5" fill="#e6eaed"/></svg></div>
<div class="tbn" style="left:1525.5px;top:5.5px;width:37px;height:40px"><svg width="37" height="40" viewBox="0 0 37 40"></svg></div>
<span class="t" style="left:1537.0px;top:12.6px;font-size:27px;line-height:27px;color:#e6eaed;font-weight:bold;transform:scaleX(0.788);">?</span>
<div class="tbn wb" style="left:1575.5px;top:14px;width:23.5px;height:23.5px"><svg width="23.5" height="23.5" viewBox="0 0 23.5 23.5"><path d="M7.5 14.500h9" stroke="#e6eaed" stroke-width="2.600"/></svg></div>
<div class="tbn wb" style="left:1600.3px;top:14px;width:23.5px;height:23.5px"><svg width="23.5" height="23.5" viewBox="0 0 23.5 23.5"><path d="M6.5 9.500h9v8h-9z" fill="none" stroke="#e6eaed" stroke-width="1.5"/><path d="M6.5 10.500h9" stroke="#e6eaed" stroke-width="2"/><path d="M9 9.500v-2.500h9v8h-2.5" fill="none" stroke="#e6eaed" stroke-width="1.300"/></svg></div>
<div class="tbn wb" style="left:1625.3px;top:14px;width:23.5px;height:23.5px"><svg width="23.5" height="23.5" viewBox="0 0 23.5 23.5"><path d="M7 7l9.5 9.500M16.5 7L7 16.5" stroke="#e6eaed" stroke-width="1.800"/></svg></div>
<svg class="abs" style="left:1662px;top:18px" width="8" height="15" viewBox="0 0 8 15"><path d="M1 1l6 6.500-6 6.500z" fill="#6f7a82"/></svg>
<div class="abs" id="news"></div>
<span class="t" style="left:1575.5px;top:59.5px;font-size:14.5px;line-height:14.5px;color:#a4b2b7;transform:scaleX(0.905);">Today</span>
<span class="t" style="left:1618.5px;top:59.5px;font-size:14.5px;line-height:14.5px;color:#e8eef0;transform:scaleX(0.739);">FL</span>
<span class="t" style="left:1575.5px;top:77.0px;font-size:14.5px;line-height:14.5px;color:#dfe7ea;transform:scaleX(0.914);">Studio versio..</span>
<svg class="abs" style="left:1663.5px;top:71px" width="6" height="10" viewBox="0 0 6 10"><path d="M0 0l5.5 5-5.5 5z" fill="#8fa0a6"/></svg>
</div>
<div id="sep"></div><div id="pl"></div>
<div id="plln"></div><div id="plist">
<div class="pat p0" style="top:4.4px;background-color:#1f0f8e;color:#b9aefc"><svg class="pli" viewBox="0 0 10 11"><path d="M0 0h10v11h-10v-2h7v-1.5h-7v-2h7v-1.5h-7z" fill="currentColor"/></svg><span class="cx" style="transform:scaleX(0.857)">Pattern 1</span></div>
<div class="pat p1" style="top:42.4px;background-color:#c94fa3;color:#fff0fa"><svg class="pli" viewBox="0 0 10 11"><path d="M0 0h10v11h-10v-2h7v-1.5h-7v-2h7v-1.5h-7z" fill="currentColor"/></svg><span class="cx" style="transform:scaleX(0.857)">Pattern 2</span></div>
<div class="pat p2" style="top:80.4px;background-color:#4a5b9c;color:#e4e8ff"><svg class="pli" viewBox="0 0 10 11"><path d="M0 0h10v11h-10v-2h7v-1.5h-7v-2h7v-1.5h-7z" fill="currentColor"/></svg><span class="cx" style="transform:scaleX(0.857)">Pattern 3</span></div>
<div class="pat p3" style="top:118.4px;background-color:#4a5b9c;color:#e4e8ff"><svg class="pli" viewBox="0 0 10 11"><path d="M0 0h10v11h-10v-2h7v-1.5h-7v-2h7v-1.5h-7z" fill="currentColor"/></svg><span class="cx" style="transform:scaleX(0.857)">Pattern 4</span></div>
<div class="pat p4" style="top:156.4px;background-color:#46d232;color:#eaffde"><svg class="pli" viewBox="0 0 10 11"><path d="M0 0h10v11h-10v-2h7v-1.5h-7v-2h7v-1.5h-7z" fill="currentColor"/></svg><span class="cx" style="transform:scaleX(0.857)">Pattern 5</span></div>
<div class="pat p5" style="top:194.4px;background-color:#c4cbd2;color:#4b535b"><svg class="pli" viewBox="0 0 10 11"><path d="M0 0h10v11h-10v-2h7v-1.5h-7v-2h7v-1.5h-7z" fill="currentColor"/></svg><span class="cx" style="transform:scaleX(0.857)">Pattern 6</span></div>
<div class="pat p6" style="top:232.4px;background-color:#e4e8eb;color:#656d75"><svg class="pli" viewBox="0 0 10 11"><path d="M0 0h10v11h-10v-2h7v-1.5h-7v-2h7v-1.5h-7z" fill="currentColor"/></svg><span class="cx" style="transform:scaleX(0.857)">Pattern 7</span></div>
<div class="pat p7" style="top:270.4px;background-color:#49545b;color:#dfe5e8"><svg class="pli" viewBox="0 0 10 11"><path d="M0 0h10v11h-10v-2h7v-1.5h-7v-2h7v-1.5h-7z" fill="currentColor"/></svg><span class="cx" style="transform:scaleX(0.857)">Pattern 9</span></div>
<div class="pat p8" style="top:308.4px;background-color:#e04cd0;color:#ffe6fb"><svg class="pli" viewBox="0 0 10 11"><path d="M0 0h10v11h-10v-2h7v-1.5h-7v-2h7v-1.5h-7z" fill="currentColor"/></svg><span class="cx" style="transform:scaleX(0.877)">Pattern 11</span></div>
<div class="pat p9" style="top:346.4px;background-color:#1d0820;color:#e070d4"><svg class="pli" viewBox="0 0 10 11"><path d="M0 0h10v11h-10v-2h7v-1.5h-7v-2h7v-1.5h-7z" fill="currentColor"/></svg><span class="cx" style="transform:scaleX(0.865)">Pattern 12</span></div>
<div class="pat p10" style="top:384.4px;background-color:#8ee85e;color:#143c0c"><svg class="pli" viewBox="0 0 10 11"><path d="M0 0h10v11h-10v-2h7v-1.5h-7v-2h7v-1.5h-7z" fill="currentColor"/></svg><span class="cx" style="transform:scaleX(0.865)">Pattern 13</span></div>
<div class="pat p11" style="top:422.4px;background-color:#22921f;color:#cffac0"><svg class="pli" viewBox="0 0 10 11"><path d="M0 0h10v11h-10v-2h7v-1.5h-7v-2h7v-1.5h-7z" fill="currentColor"/></svg><span class="cx" style="transform:scaleX(0.865)">Pattern 14</span></div>
<div class="pat p12" style="top:460.4px;background-color:#c07036;color:#ffecc0"><svg class="pli" viewBox="0 0 10 11"><path d="M0 0h10v11h-10v-2h7v-1.5h-7v-2h7v-1.5h-7z" fill="currentColor"/></svg><span class="cx" style="transform:scaleX(0.865)">Pattern 15</span></div>
<div class="pat p13" style="top:498.4px;background-color:#da98cc;color:#fff4fc"><svg class="pli" viewBox="0 0 10 11"><path d="M0 0h10v11h-10v-2h7v-1.5h-7v-2h7v-1.5h-7z" fill="currentColor"/></svg><span class="cx" style="transform:scaleX(0.865)">Pattern 16</span></div>
<div class="pat p14" style="top:536.4px;background-color:#8b2b21;color:#ffd0c0"><svg class="pli" viewBox="0 0 10 11"><path d="M0 0h10v11h-10v-2h7v-1.5h-7v-2h7v-1.5h-7z" fill="currentColor"/></svg><span class="cx" style="transform:scaleX(0.865)">Pattern 17</span></div>
<div class="pat p15" style="top:574.4px;background-color:#3e9a22;color:#dcf8c0"><svg class="pli" viewBox="0 0 10 11"><path d="M0 0h10v11h-10v-2h7v-1.5h-7v-2h7v-1.5h-7z" fill="currentColor"/></svg><span class="cx" style="transform:scaleX(0.865)">Pattern 18</span></div>
<div class="pat p16" style="top:612.4px;background-color:#4b104a;color:#eaa0e4"><svg class="pli" viewBox="0 0 10 11"><path d="M0 0h10v11h-10v-2h7v-1.5h-7v-2h7v-1.5h-7z" fill="currentColor"/></svg><span class="cx" style="transform:scaleX(0.865)">Pattern 24</span></div>
<div class="pat p17" style="top:650.4px;background-color:#7a2298;color:#f4c8fa"><svg class="pli" viewBox="0 0 10 11"><path d="M0 0h10v11h-10v-2h7v-1.5h-7v-2h7v-1.5h-7z" fill="currentColor"/></svg><span class="cx" style="transform:scaleX(0.865)">Pattern 25</span></div>
<div class="pat p18" style="top:688.4px;background-color:#e46a50;color:#ffe8e0"><svg class="pli" viewBox="0 0 10 11"><path d="M0 0h10v11h-10v-2h7v-1.5h-7v-2h7v-1.5h-7z" fill="currentColor"/></svg><span class="cx" style="transform:scaleX(0.865)">Pattern 26</span></div>
<div class="pat p19" style="top:726.4px;background-color:#f0e838;color:#26280c"><svg class="pli" viewBox="0 0 10 11"><path d="M0 0h10v11h-10v-2h7v-1.5h-7v-2h7v-1.5h-7z" fill="currentColor"/></svg><span class="cx" style="transform:scaleX(0.865)">Pattern 27</span></div>
<div class="pat p20" style="top:764.4px;background-color:#f0e838;color:#26280c"><svg class="pli" viewBox="0 0 10 11"><path d="M0 0h10v11h-10v-2h7v-1.5h-7v-2h7v-1.5h-7z" fill="currentColor"/></svg><span class="cx" style="transform:scaleX(0.865)">Pattern 28</span></div>
</div>
<svg class="abs" style="left:2.5px;top:917.5px" width="11" height="16" viewBox="0 0 11 16"><path d="M1 1.2l8.5 6.8-8.5 6.8z" fill="#e8385c" stroke="#3a1018" stroke-width="1.3"/></svg>
<div class="abs" id="pladd"><span>+</span></div>
<div id="plsb"><div class="sbb" style="top:0;height:14px"><i class="dot"></i></div><div class="sbb" style="top:16px;height:15px"><svg width="18" height="15" viewBox="0 0 18 15"><path d="M5 9.5l4-4 4 4" fill="none" stroke="#2b3238" stroke-width="1.4"/></svg></div><div class="sbt" style="top:34px;height:491px"></div><div class="sbb" style="top:772px;height:16px"><svg width="18" height="16" viewBox="0 0 18 16"><path d="M5 6l4 4 4-4" fill="none" stroke="#2b3238" stroke-width="1.4"/></svg></div></div>
<svg class="abs" style="left:19px;top:157.5px" width="19.5" height="14.5" viewBox="0 0 24 19" preserveAspectRatio="none"><path d="M0 1h5.5v9h3.5v-9h5.5v9h3.5v-9h5.5v17h-23.5z" fill="#e9edef"/></svg>
<svg class="abs" style="left:75px;top:155.5px" width="26" height="18" viewBox="0 0 26 20" preserveAspectRatio="none"><path d="M0 10L2.8 7.8 5.5 9 7.5 5 9.5 7.5 13 0 16.5 7.5 18.5 5 20.5 9 23.2 7.8 26 10 23.2 12.2 20.5 11 18.5 15 16.5 12.5 13 20 9.5 12.5 7.5 15 5.5 11 2.8 12.2z" fill="#9aa4aa"/></svg>
<svg class="abs" style="left:136px;top:155.5px" width="24" height="19" viewBox="0 0 26 20"><path d="M5 15L20 5" stroke="#8d979d" stroke-width="2"/><circle cx="4.5" cy="15" r="3" fill="#40484f" stroke="#8d979d" stroke-width="1.6"/><circle cx="20.5" cy="4.5" r="3" fill="#40484f" stroke="#8d979d" stroke-width="1.6"/></svg>
<div id="thdr"><svg width="140" height="52" viewBox="0 0 140 52" class="abs" style="left:0;top:0"><defs><linearGradient id="tg" x1="0" y1="0" x2="0" y2="1"><stop offset="0" stop-color="#58626a"/><stop offset="1" stop-color="#4f5860"/></linearGradient></defs><path d="M0 52V42L18 6q3-5 9-5H140V52z" fill="url(#tg)" stroke="#272d32" stroke-width="1.3"/></svg>
<svg class="abs" style="left:45px;top:5px" width="26" height="20" viewBox="0 0 26 20"><path d="M0 10L2.8 7.8 5.5 9 7.5 5 9.5 7.5 13 0 16.5 7.5 18.5 5 20.5 9 23.2 7.8 26 10 23.2 12.2 20.5 11 18.5 15 16.5 12.5 13 20 9.5 12.5 7.5 15 5.5 11 2.8 12.2z" fill="#edf1f3"/></svg>
<svg class="abs" style="left:80px;top:5px" width="24" height="20" viewBox="0 0 24 20"><path d="M5 15L19 5" stroke="#7f898f" stroke-width="1.8"/><circle cx="4.5" cy="15.5" r="2.6" fill="none" stroke="#7f898f" stroke-width="1.5"/><circle cx="19.5" cy="4.5" r="2.6" fill="none" stroke="#7f898f" stroke-width="1.5"/></svg>
<svg class="abs" style="left:112px;top:7px" width="20" height="16" viewBox="0 0 20 16"><path d="M0 0h4.5v8h3v-8h5v8h3v-8h4.5v15h-20z" fill="#79838a"/></svg>
<span class="abs opt" style="left:27px;top:35.5px;transform:scaleX(0.970)">Z-CROSS</span><i class="abs ck" style="left:64.5px;top:34px"></i><span class="abs opt" style="left:86px;top:35.5px;transform:scaleX(0.927)">STRETCH</span><i class="abs ck" style="left:123px;top:34px"></i></div>
<div id="tracks">
<div class="trk" style="top:0px"><span class="cx" style="transform:scaleX(0.845)">Track 1</span><svg class="abs" style="left:93px;top:10px" width="13" height="9" viewBox="0 0 13 9"><path d="M1 8L6.5 1 12 8z" fill="#e4e8ea"/></svg><i class="led"></i></div>
<div class="trk ind" style="top:30px"><span class="cx" style="transform:scaleX(0.845)">Track 2</span><i class="led"></i></div>
<div class="trk ind" style="top:60px"><span class="cx" style="transform:scaleX(0.845)">Track 3</span><i class="led"></i></div>
<div class="trk" style="top:90px"><span class="cx" style="transform:scaleX(0.845)">Track 4</span><i class="led"></i></div>
<div class="trk" style="top:120px"><span class="cx" style="transform:scaleX(0.845)">Track 5</span><i class="led"></i></div>
<div class="trk" style="top:150px"><span class="cx" style="transform:scaleX(0.845)">Track 6</span><i class="led"></i></div>
<div class="trk" style="top:180px;height:27px;line-height:25px"><span class="cx" style="transform:scaleX(0.845)">Track 7</span><i class="led"></i></div>
<div class="trk" style="top:208px"><span class="cx" style="transform:scaleX(0.845)">Track 8</span><i class="led"></i></div>
<div class="trk" style="top:238px"><span class="cx" style="transform:scaleX(0.845)">Track 9</span><i class="led"></i></div>
<div class="trk" style="top:268px"><span class="cx" style="transform:scaleX(0.853)">Track 10</span><i class="led"></i></div>
<div class="trk" style="top:298px"><span class="cx" style="transform:scaleX(0.868)">Track 11</span><i class="led"></i></div>
<div class="trk" style="top:328px"><span class="cx" style="transform:scaleX(0.853)">Track 12</span><i class="led"></i></div>
<div class="trk" style="top:358px"><span class="cx" style="transform:scaleX(0.853)">Track 13</span><i class="led"></i></div>
<div class="trk" style="top:388px"><span class="cx" style="transform:scaleX(0.853)">Track 14</span><i class="led"></i></div>
<div class="trk" style="top:418px"><span class="cx" style="transform:scaleX(0.853)">Track 15</span><i class="led"></i></div>
<div class="trk" style="top:448px"><span class="cx" style="transform:scaleX(0.853)">Track 16</span><i class="led"></i></div>
<div class="trk" style="top:478px"><span class="cx" style="transform:scaleX(0.853)">Track 17</span><i class="led"></i></div>
<div class="trk" style="top:508px"><span class="cx" style="transform:scaleX(0.853)">Track 18</span><i class="led"></i></div>
<div class="trk" style="top:538px"><span class="cx" style="transform:scaleX(0.853)">Track 19</span><i class="led"></i></div>
<div class="trk" style="top:568px"><span class="cx" style="transform:scaleX(0.853)">Track 20</span><i class="led"></i></div>
<div class="trk" style="top:598px"><span class="cx" style="transform:scaleX(0.853)">Track 21</span><i class="led"></i></div>
<div class="trk" style="top:628px"><span class="cx" style="transform:scaleX(0.853)">Track 22</span><i class="led"></i></div>
<div class="trk" style="top:658px"><span class="cx" style="transform:scaleX(0.853)">Track 23</span><i class="led"></i></div>
<div class="trk" style="top:688px"><span class="cx" style="transform:scaleX(0.853)">Track 24</span><i class="led"></i></div>
<div class="trk" style="top:718px"><span class="cx" style="transform:scaleX(0.853)">Track 25</span><i class="led"></i></div>
<div class="trk" style="top:748px"><span class="cx" style="transform:scaleX(0.853)">Track 26</span><i class="led"></i></div>
<div class="trk" style="top:778px"><span class="cx" style="transform:scaleX(0.853)">Track 27</span><i class="led"></i></div>
<div class="trk" style="top:808px"><span class="cx" style="transform:scaleX(0.853)">Track 28</span><i class="led"></i></div>
<div class="grp"></div></div>
<div id="grid">
<i class="vl0"></i>
<i class="vl od" style="left:0px"></i>
<i class="vl" style="left:16px"></i>
<i class="vl od" style="left:33px"></i>
<i class="vl" style="left:49px"></i>
<i class="vl od" style="left:65px"></i>
<i class="vl" style="left:82px"></i>
<i class="vl od" style="left:98px"></i>
<i class="vl" style="left:115px"></i>
<i class="vl od" style="left:131px"></i>
<i class="vl" style="left:148px"></i>
<i class="vl od" style="left:164px"></i>
<i class="vl" style="left:180px"></i>
<i class="vl od" style="left:197px"></i>
<i class="vl" style="left:213px"></i>
<i class="vl od" style="left:230px"></i>
<i class="vl" style="left:246px"></i>
<i class="vl od" style="left:263px"></i>
<i class="vl" style="left:279px"></i>
<i class="vl od" style="left:295px"></i>
<i class="vl" style="left:312px"></i>
<i class="vl od" style="left:328px"></i>
<i class="vl" style="left:345px"></i>
<i class="vl od" style="left:361px"></i>
<i class="vl" style="left:378px"></i>
<i class="vl od" style="left:394px"></i>
<i class="vl" style="left:410px"></i>
<i class="vl od" style="left:427px"></i>
<i class="vl" style="left:443px"></i>
<i class="vl od" style="left:460px"></i>
<i class="vl" style="left:476px"></i>
<i class="vl od" style="left:493px"></i>
<i class="vl" style="left:509px"></i>
<i class="vl od" style="left:525px"></i>
<i class="vl" style="left:542px"></i>
<i class="vl od" style="left:558px"></i>
<i class="vl" style="left:575px"></i>
<i class="vl od" style="left:591px"></i>
<i class="vl" style="left:608px"></i>
<i class="vl od" style="left:624px"></i>
<i class="vl" style="left:640px"></i>
<i class="vl od" style="left:657px"></i>
<i class="vl" style="left:673px"></i>
<i class="vl od" style="left:690px"></i>
<i class="vl" style="left:706px"></i>
<i class="vl od" style="left:723px"></i>
<i class="vl" style="left:739px"></i>
<i class="vl od" style="left:755px"></i>
<i class="vl" style="left:772px"></i>
<i class="vl od" style="left:788px"></i>
<i class="vl" style="left:805px"></i>
<i class="vl od" style="left:821px"></i>
<i class="vl" style="left:838px"></i>
<i class="vl od" style="left:854px"></i>
<i class="vl" style="left:870px"></i>
<i class="vl od" style="left:887px"></i>
<i class="vl" style="left:903px"></i>
<i class="vl od" style="left:920px"></i>
<i class="vl" style="left:936px"></i>
<i class="vl od" style="left:953px"></i>
<i class="vl" style="left:969px"></i>
<i class="vl od" style="left:986px"></i>
<i class="vl" style="left:1002px"></i>
<i class="vl od" style="left:1018px"></i>
<i class="vl" style="left:1035px"></i>
<i class="vl od" style="left:1051px"></i>
<i class="vl" style="left:1068px"></i>
<i class="vl od" style="left:1084px"></i>
<i class="vl" style="left:1101px"></i>
<i class="vl od" style="left:1117px"></i>
<i class="vl" style="left:1133px"></i>
<i class="vl od" style="left:1150px"></i>
<i class="vl" style="left:1166px"></i>
<i class="vl od" style="left:1183px"></i>
<i class="vl" style="left:1199px"></i>
<i class="vl od" style="left:1216px"></i>
<i class="vl" style="left:1232px"></i>
<i class="vl od" style="left:1248px"></i>
<i class="vl" style="left:1265px"></i>
<i class="vl od" style="left:1281px"></i>
<i class="vl" style="left:1298px"></i>
<i class="vl od" style="left:1314px"></i>
<div class="hl" style="top:0;background:#6178be"></div>
<div class="hl" style="top:30px"></div>
<div class="hl" style="top:60px"></div>
<div class="hl" style="top:90px"></div>
<div class="hl" style="top:120px"></div>
<div class="hl" style="top:150px"></div>
<div class="hl" style="top:180px"></div>
<div class="hl" style="top:208px"></div>
<div class="hl" style="top:238px"></div>
<div class="hl" style="top:268px"></div>
<div class="hl" style="top:298px"></div>
<div class="hl" style="top:328px"></div>
<div class="hl" style="top:358px"></div>
<div class="hl" style="top:388px"></div>
<div class="hl" style="top:418px"></div>
<div class="hl" style="top:448px"></div>
<div class="hl" style="top:478px"></div>
<div class="hl" style="top:508px"></div>
<div class="hl" style="top:538px"></div>
<div class="hl" style="top:568px"></div>
<div class="hl" style="top:598px"></div>
<div class="hl" style="top:628px"></div>
<div class="hl" style="top:658px"></div>
<div class="hl" style="top:688px"></div>
<div class="hl" style="top:718px"></div>
<div class="hl" style="top:748px"></div>
<div class="hl" style="top:778px"></div>
<div class="hl" style="top:808px"></div>
<i class="sln" style="left:33px;width:1px"></i>
<i class="sln" style="left:164px;width:2px"></i>
<div class="stp" style="left:295px;width:296px"></div>
<i class="sln" style="left:295px;width:1px"></i>
<i class="sln" style="left:300px;width:1px"></i>
<i class="sln" style="left:304px;width:1px"></i>
<i class="sln" style="left:308px;width:1px"></i>
<i class="sln" style="left:312px;width:1px"></i>
<i class="sln" style="left:316px;width:1px"></i>
<i class="sln" style="left:320px;width:2px"></i>
<i class="sln" style="left:324px;width:2px"></i>
<i class="sln" style="left:328px;width:2px"></i>
<i class="sln" style="left:332px;width:1px"></i>
<i class="sln" style="left:337px;width:1px"></i>
<i class="sln" style="left:341px;width:1px"></i>
<i class="sln" style="left:345px;width:1px"></i>
<i class="sln" style="left:349px;width:1px"></i>
<i class="sln" style="left:353px;width:1px"></i>
<i class="sln" style="left:357px;width:1px"></i>
<i class="sln" style="left:361px;width:2px"></i>
<i class="sln" style="left:365px;width:2px"></i>
<i class="sln" style="left:369px;width:1px"></i>
<i class="sln" style="left:373px;width:1px"></i>
<i class="sln" style="left:378px;width:1px"></i>
<i class="sln" style="left:382px;width:1px"></i>
<i class="sln" style="left:386px;width:1px"></i>
<i class="sln" style="left:390px;width:1px"></i>
<i class="sln" style="left:394px;width:1px"></i>
<i class="sln" style="left:398px;width:2px"></i>
<i class="sln" style="left:402px;width:2px"></i>
<i class="sln" style="left:406px;width:2px"></i>
<i class="sln" style="left:410px;width:1px"></i>
<i class="sln" style="left:415px;width:1px"></i>
<i class="sln" style="left:419px;width:1px"></i>
<i class="sln" style="left:423px;width:1px"></i>
<i class="sln" style="left:427px;width:1px"></i>
<i class="sln" style="left:431px;width:1px"></i>
<i class="sln" style="left:435px;width:2px"></i>
<i class="sln" style="left:439px;width:2px"></i>
<i class="sln" style="left:443px;width:2px"></i>
<i class="sln" style="left:447px;width:1px"></i>
<i class="sln" style="left:452px;width:1px"></i>
<i class="sln" style="left:456px;width:1px"></i>
<i class="sln" style="left:460px;width:1px"></i>
<i class="sln" style="left:464px;width:1px"></i>
<i class="sln" style="left:468px;width:1px"></i>
<i class="sln" style="left:472px;width:1px"></i>
<i class="sln" style="left:476px;width:2px"></i>
<i class="sln" style="left:480px;width:2px"></i>
<i class="sln" style="left:484px;width:1px"></i>
<i class="sln" style="left:488px;width:1px"></i>
<i class="sln" style="left:493px;width:1px"></i>
<i class="sln" style="left:497px;width:1px"></i>
<i class="sln" style="left:501px;width:1px"></i>
<i class="sln" style="left:505px;width:1px"></i>
<i class="sln" style="left:509px;width:1px"></i>
<i class="sln" style="left:513px;width:2px"></i>
<i class="sln" style="left:517px;width:2px"></i>
<i class="sln" style="left:521px;width:2px"></i>
<i class="sln" style="left:525px;width:1px"></i>
<i class="sln" style="left:530px;width:1px"></i>
<i class="sln" style="left:534px;width:1px"></i>
<i class="sln" style="left:538px;width:1px"></i>
<i class="sln" style="left:542px;width:1px"></i>
<i class="sln" style="left:546px;width:1px"></i>
<i class="sln" style="left:550px;width:2px"></i>
<i class="sln" style="left:554px;width:2px"></i>
<i class="sln" style="left:558px;width:2px"></i>
<i class="sln" style="left:562px;width:1px"></i>
<i class="sln" style="left:567px;width:1px"></i>
<i class="sln" style="left:571px;width:1px"></i>
<i class="sln" style="left:575px;width:1px"></i>
<i class="sln" style="left:579px;width:1px"></i>
<i class="sln" style="left:583px;width:1px"></i>
<i class="sln" style="left:587px;width:1px"></i>
<i class="sln" style="left:887px;width:1px"></i>
<div class="stp" style="left:920px;width:68px"></div>
<i class="sln" style="left:920px;width:1px"></i>
<i class="sln" style="left:924px;width:1px"></i>
<i class="sln" style="left:928px;width:1px"></i>
<i class="sln" style="left:932px;width:1px"></i>
<i class="sln" style="left:936px;width:1px"></i>
<i class="sln" style="left:940px;width:2px"></i>
<i class="sln" style="left:944px;width:2px"></i>
<i class="sln" style="left:949px;width:2px"></i>
<i class="sln" style="left:953px;width:1px"></i>
<i class="sln" style="left:957px;width:1px"></i>
<i class="sln" style="left:961px;width:1px"></i>
<i class="sln" style="left:965px;width:1px"></i>
<i class="sln" style="left:969px;width:1px"></i>
<i class="sln" style="left:973px;width:1px"></i>
<i class="sln" style="left:977px;width:2px"></i>
<i class="sln" style="left:981px;width:2px"></i>
<i class="sln" style="left:986px;width:2px"></i>
<i class="sln" style="left:1002px;width:1px"></i>
<div class="stp" style="left:1014px;width:5px"></div>
<i class="sln" style="left:1014px;width:1px"></i>
<div class="stp" style="left:1018px;width:66px"></div>
<i class="sln" style="left:1018px;width:2px"></i>
<i class="sln" style="left:1022px;width:2px"></i>
<i class="sln" style="left:1027px;width:2px"></i>
<i class="sln" style="left:1031px;width:1px"></i>
<i class="sln" style="left:1035px;width:1px"></i>
<i class="sln" style="left:1039px;width:2px"></i>
<i class="sln" style="left:1043px;width:1px"></i>
<i class="sln" style="left:1047px;width:1px"></i>
<i class="sln" style="left:1051px;width:1px"></i>
<i class="sln" style="left:1055px;width:1px"></i>
<i class="sln" style="left:1059px;width:2px"></i>
<i class="sln" style="left:1064px;width:2px"></i>
<i class="sln" style="left:1068px;width:1px"></i>
<i class="sln" style="left:1072px;width:1px"></i>
<i class="sln" style="left:1076px;width:1px"></i>
<i class="sln" style="left:1080px;width:1px"></i>
<i class="sln" style="left:1084px;width:1px"></i>
<div class="clip c-or" style="left:295px;top:0.0px;width:66px"><svg class="ai" viewBox="0 0 11 9"><path d="M0 0L3.6 3.1 5 1.6 7 3.6 10.5 4.5 7 5.4 5 7.4 3.6 5.9 0 9z" fill="currentColor"/></svg><span class="cx" style="transform:scaleX(0.763)">11.._SP</span></div>
<div class="clip c-or" style="left:427px;top:0.0px;width:66px"><svg class="ai" viewBox="0 0 11 9"><path d="M0 0L3.6 3.1 5 1.6 7 3.6 10.5 4.5 7 5.4 5 7.4 3.6 5.9 0 9z" fill="currentColor"/></svg><span class="cx" style="transform:scaleX(0.763)">11.._SP</span></div>
<div class="clip c-or" style="left:558px;top:0.0px;width:50px"><svg class="ai" viewBox="0 0 11 9"><path d="M0 0L3.6 3.1 5 1.6 7 3.6 10.5 4.5 7 5.4 5 7.4 3.6 5.9 0 9z" fill="currentColor"/></svg><span class="cx" style="transform:scaleX(0.756)">1..SP</span></div>
<div class="clip c-or" style="left:920px;top:0.0px;width:66px"><svg class="ai" viewBox="0 0 11 9"><path d="M0 0L3.6 3.1 5 1.6 7 3.6 10.5 4.5 7 5.4 5 7.4 3.6 5.9 0 9z" fill="currentColor"/></svg><span class="cx" style="transform:scaleX(0.763)">11.._SP</span></div>
<div class="clip c-or" style="left:1051px;top:0.0px;width:50px"><svg class="ai" viewBox="0 0 11 9"><path d="M0 0L3.6 3.1 5 1.6 7 3.6 10.5 4.5 7 5.4 5 7.4 3.6 5.9 0 9z" fill="currentColor"/></svg><span class="cx" style="transform:scaleX(0.756)">1..SP</span></div>
<div class="clip c-sl1" style="left:1014.5px;top:1.0px;width:3.2px;height:29px"></div>
<div class="clip c-lo" style="left:361px;top:30.0px;width:66px"><svg class="ai" viewBox="0 0 11 9"><path d="M0 0L3.6 3.1 5 1.6 7 3.6 10.5 4.5 7 5.4 5 7.4 3.6 5.9 0 9z" fill="currentColor"/></svg><span class="cx" style="transform:scaleX(0.842)">110..02</span></div>
<div class="clip c-lo" style="left:493px;top:30.0px;width:65px"><svg class="ai" viewBox="0 0 11 9"><path d="M0 0L3.6 3.1 5 1.6 7 3.6 10.5 4.5 7 5.4 5 7.4 3.6 5.9 0 9z" fill="currentColor"/></svg><span class="cx" style="transform:scaleX(0.763)">11.._SP</span></div>
<div class="clip c-red" style="left:920.0px;top:30.0px;width:14.0px"><svg class="ai" viewBox="0 0 11 9"><path d="M0 0L3.6 3.1 5 1.6 7 3.6 10.5 4.5 7 5.4 5 7.4 3.6 5.9 0 9z" fill="currentColor"/></svg></div>
<div class="clip c-lo sl" style="left:985.5px;top:31.0px;width:2.5px;height:29px"></div>
<div class="clip c-lo sl" style="left:1002.0px;top:31.0px;width:2.5px;height:29px"></div>
<div class="clip c-lo" style="left:1018px;top:30.0px;width:33px"><svg class="ai" viewBox="0 0 11 9"><path d="M0 0L3.6 3.1 5 1.6 7 3.6 10.5 4.5 7 5.4 5 7.4 3.6 5.9 0 9z" fill="currentColor"/></svg></div>
<div class="clip c-bl" style="left:33px;top:60.0px;width:65px"><svg class="ai" viewBox="0 0 11 9"><path d="M0 0L3.6 3.1 5 1.6 7 3.6 10.5 4.5 7 5.4 5 7.4 3.6 5.9 0 9z" fill="currentColor"/></svg><span class="cx" style="transform:scaleX(0.819)">Conga</span></div>
<div class="clip c-bl" style="left:98px;top:60.0px;width:66px"><svg class="ai" viewBox="0 0 11 9"><path d="M0 0L3.6 3.1 5 1.6 7 3.6 10.5 4.5 7 5.4 5 7.4 3.6 5.9 0 9z" fill="currentColor"/></svg><span class="cx" style="transform:scaleX(0.819)">Conga</span></div>
<div class="clip c-bl" style="left:164px;top:60.0px;width:66px"><svg class="ai" viewBox="0 0 11 9"><path d="M0 0L3.6 3.1 5 1.6 7 3.6 10.5 4.5 7 5.4 5 7.4 3.6 5.9 0 9z" fill="currentColor"/></svg><span class="cx" style="transform:scaleX(0.819)">Conga</span></div>
<div class="clip c-bl" style="left:230px;top:60.0px;width:49px"><svg class="ai" viewBox="0 0 11 9"><path d="M0 0L3.6 3.1 5 1.6 7 3.6 10.5 4.5 7 5.4 5 7.4 3.6 5.9 0 9z" fill="currentColor"/></svg><span class="cx" style="transform:scaleX(0.731)">C..ga</span></div>
<div class="clip c-bl" style="left:821px;top:60.0px;width:49px"><svg class="ai" viewBox="0 0 11 9"><path d="M0 0L3.6 3.1 5 1.6 7 3.6 10.5 4.5 7 5.4 5 7.4 3.6 5.9 0 9z" fill="currentColor"/></svg><span class="cx" style="transform:scaleX(0.731)">C..ga</span></div>
<div class="clip c-go" style="left:986px;top:60.0px;width:16px"><svg class="ai" viewBox="0 0 11 9"><path d="M0 0L3.6 3.1 5 1.6 7 3.6 10.5 4.5 7 5.4 5 7.4 3.6 5.9 0 9z" fill="currentColor"/></svg></div>
<div class="clip c-go sl" style="left:1002.5px;top:61.0px;width:3.5px;height:29px"></div>
<div class="clip c-go sl" style="left:1006.5px;top:61.0px;width:7.5px;height:29px"></div>
<div class="clip c-go sl" style="left:1014.5px;top:61.0px;width:3.5px;height:29px"></div>
<div class="clip c-go" style="left:1018.0px;top:60.0px;width:27.0px"><svg class="ai" viewBox="0 0 11 9"><path d="M0 0L3.6 3.1 5 1.6 7 3.6 10.5 4.5 7 5.4 5 7.4 3.6 5.9 0 9z" fill="currentColor"/></svg></div>
<div class="clip c-gg" style="left:279px;top:90.0px;width:16px"><svg class="ai" viewBox="0 0 11 9"><path d="M0 0L3.6 3.1 5 1.6 7 3.6 10.5 4.5 7 5.4 5 7.4 3.6 5.9 0 9z" fill="currentColor"/></svg></div>
<div class="clip c-gg" style="left:608px;top:90.0px;width:15px"><svg class="ai" viewBox="0 0 11 9"><path d="M0 0L3.6 3.1 5 1.6 7 3.6 10.5 4.5 7 5.4 5 7.4 3.6 5.9 0 9z" fill="currentColor"/></svg></div>
<div class="clip c-gg" style="left:870px;top:90.0px;width:16px"><svg class="ai" viewBox="0 0 11 9"><path d="M0 0L3.6 3.1 5 1.6 7 3.6 10.5 4.5 7 5.4 5 7.4 3.6 5.9 0 9z" fill="currentColor"/></svg></div>
<div class="clip c-gg" style="left:1101px;top:90.0px;width:15px"><svg class="ai" viewBox="0 0 11 9"><path d="M0 0L3.6 3.1 5 1.6 7 3.6 10.5 4.5 7 5.4 5 7.4 3.6 5.9 0 9z" fill="currentColor"/></svg></div>
<div class="clip c-lp" style="left:755px;top:120.0px;width:66px"><svg class="ai" viewBox="0 0 11 9"><path d="M0 0L3.6 3.1 5 1.6 7 3.6 10.5 4.5 7 5.4 5 7.4 3.6 5.9 0 9z" fill="currentColor"/></svg><span class="cx" style="transform:scaleX(0.881)">Ta..ora</span></div>
<div class="clip c-gt" style="left:1002px;top:120.0px;width:16px"><svg class="ai" viewBox="0 0 11 9"><path d="M0 0L3.6 3.1 5 1.6 7 3.6 10.5 4.5 7 5.4 5 7.4 3.6 5.9 0 9z" fill="currentColor"/></svg></div>
<div class="clip c-yg" style="left:164.0px;top:180.0px;width:15.3px;height:28px;line-height:27px"><svg class="yi" viewBox="0 0 12 8"><path d="M0 7.5c.8-3.6 2.6-5 5-5.2l-.6 1.8c1.6-2.6 3.8-3.6 7.4-3.8-2.8.9-4.6 2.6-5.6 5.4l.2-2c-2.200 0-4.400 1.200-6.400 3.800z" fill="currentColor"/></svg></div>
<div class="clip c-yg" style="left:180.0px;top:180.0px;width:15.3px;height:28px;line-height:27px"><svg class="yi" viewBox="0 0 12 8"><path d="M0 7.5c.8-3.6 2.6-5 5-5.2l-.6 1.8c1.6-2.6 3.8-3.6 7.4-3.8-2.8.9-4.6 2.6-5.6 5.4l.2-2c-2.200 0-4.400 1.200-6.400 3.800z" fill="currentColor"/></svg></div>
<div class="clip c-yg" style="left:197.0px;top:180.0px;width:15.3px;height:28px;line-height:27px"><svg class="yi" viewBox="0 0 12 8"><path d="M0 7.5c.8-3.6 2.6-5 5-5.2l-.6 1.8c1.6-2.6 3.8-3.6 7.4-3.8-2.8.9-4.6 2.6-5.6 5.4l.2-2c-2.200 0-4.400 1.200-6.400 3.800z" fill="currentColor"/></svg></div>
<div class="clip c-yg" style="left:213.0px;top:180.0px;width:15.3px;height:28px;line-height:27px"><svg class="yi" viewBox="0 0 12 8"><path d="M0 7.5c.8-3.6 2.6-5 5-5.2l-.6 1.8c1.6-2.6 3.8-3.6 7.4-3.8-2.8.9-4.6 2.6-5.6 5.4l.2-2c-2.200 0-4.400 1.200-6.400 3.800z" fill="currentColor"/></svg></div>
<div class="clip c-yg" style="left:230.0px;top:180.0px;width:15.3px;height:28px;line-height:27px"><svg class="yi" viewBox="0 0 12 8"><path d="M0 7.5c.8-3.6 2.6-5 5-5.2l-.6 1.8c1.6-2.6 3.8-3.6 7.4-3.8-2.8.9-4.6 2.6-5.6 5.4l.2-2c-2.200 0-4.400 1.200-6.400 3.800z" fill="currentColor"/></svg></div>
<div class="clip c-yg" style="left:246.0px;top:180.0px;width:15.3px;height:28px;line-height:27px"><svg class="yi" viewBox="0 0 12 8"><path d="M0 7.5c.8-3.6 2.6-5 5-5.2l-.6 1.8c1.6-2.6 3.8-3.6 7.4-3.8-2.8.9-4.6 2.6-5.6 5.4l.2-2c-2.200 0-4.400 1.200-6.400 3.800z" fill="currentColor"/></svg></div>
<div class="clip c-yg" style="left:263.0px;top:180.0px;width:15.3px;height:28px;line-height:27px"><svg class="yi" viewBox="0 0 12 8"><path d="M0 7.5c.8-3.6 2.6-5 5-5.2l-.6 1.8c1.6-2.6 3.8-3.6 7.4-3.8-2.8.9-4.6 2.6-5.6 5.4l.2-2c-2.200 0-4.400 1.200-6.400 3.800z" fill="currentColor"/></svg></div>
<div class="clip c-yg" style="left:427.0px;top:180.0px;width:15.3px;height:28px;line-height:27px"><svg class="yi" viewBox="0 0 12 8"><path d="M0 7.5c.8-3.6 2.6-5 5-5.2l-.6 1.8c1.6-2.6 3.8-3.6 7.4-3.8-2.8.9-4.6 2.6-5.6 5.4l.2-2c-2.200 0-4.400 1.200-6.400 3.800z" fill="currentColor"/></svg></div>
<div class="clip c-yg" style="left:443.0px;top:180.0px;width:15.3px;height:28px;line-height:27px"><svg class="yi" viewBox="0 0 12 8"><path d="M0 7.5c.8-3.6 2.6-5 5-5.2l-.6 1.8c1.6-2.6 3.8-3.6 7.4-3.8-2.8.9-4.6 2.6-5.6 5.4l.2-2c-2.200 0-4.400 1.200-6.400 3.800z" fill="currentColor"/></svg></div>
<div class="clip c-yg" style="left:460.0px;top:180.0px;width:15.3px;height:28px;line-height:27px"><svg class="yi" viewBox="0 0 12 8"><path d="M0 7.5c.8-3.6 2.6-5 5-5.2l-.6 1.8c1.6-2.6 3.8-3.6 7.4-3.8-2.8.9-4.6 2.6-5.6 5.4l.2-2c-2.200 0-4.400 1.200-6.400 3.800z" fill="currentColor"/></svg></div>
<div class="clip c-yg" style="left:476.0px;top:180.0px;width:15.3px;height:28px;line-height:27px"><svg class="yi" viewBox="0 0 12 8"><path d="M0 7.5c.8-3.6 2.6-5 5-5.2l-.6 1.8c1.6-2.6 3.8-3.6 7.4-3.8-2.8.9-4.6 2.6-5.6 5.4l.2-2c-2.200 0-4.400 1.200-6.400 3.800z" fill="currentColor"/></svg></div>
<div class="clip c-yg" style="left:493.0px;top:180.0px;width:15.3px;height:28px;line-height:27px"><svg class="yi" viewBox="0 0 12 8"><path d="M0 7.5c.8-3.6 2.6-5 5-5.2l-.6 1.8c1.6-2.6 3.8-3.6 7.4-3.8-2.8.9-4.6 2.6-5.6 5.4l.2-2c-2.200 0-4.400 1.200-6.400 3.800z" fill="currentColor"/></svg></div>
<div class="clip c-yg" style="left:509.0px;top:180.0px;width:15.3px;height:28px;line-height:27px"><svg class="yi" viewBox="0 0 12 8"><path d="M0 7.5c.8-3.6 2.6-5 5-5.2l-.6 1.8c1.6-2.6 3.8-3.6 7.4-3.8-2.8.9-4.6 2.6-5.6 5.4l.2-2c-2.200 0-4.400 1.200-6.400 3.800z" fill="currentColor"/></svg></div>
<div class="clip c-yg" style="left:525.0px;top:180.0px;width:15.3px;height:28px;line-height:27px"><svg class="yi" viewBox="0 0 12 8"><path d="M0 7.5c.8-3.6 2.6-5 5-5.2l-.6 1.8c1.6-2.6 3.8-3.6 7.4-3.8-2.8.9-4.6 2.6-5.6 5.4l.2-2c-2.200 0-4.400 1.200-6.400 3.800z" fill="currentColor"/></svg></div>
<div class="clip c-yg" style="left:542.0px;top:180.0px;width:15.3px;height:28px;line-height:27px"><svg class="yi" viewBox="0 0 12 8"><path d="M0 7.5c.8-3.6 2.6-5 5-5.2l-.6 1.8c1.6-2.6 3.8-3.6 7.4-3.8-2.8.9-4.6 2.6-5.6 5.4l.2-2c-2.200 0-4.400 1.200-6.400 3.800z" fill="currentColor"/></svg></div>
<div class="clip c-yg" style="left:558.0px;top:180.0px;width:15.3px;height:28px;line-height:27px"><svg class="yi" viewBox="0 0 12 8"><path d="M0 7.5c.8-3.6 2.6-5 5-5.2l-.6 1.8c1.6-2.6 3.8-3.6 7.4-3.8-2.8.9-4.6 2.6-5.6 5.4l.2-2c-2.200 0-4.400 1.200-6.400 3.800z" fill="currentColor"/></svg></div>
<div class="clip c-yg" style="left:575.0px;top:180.0px;width:15.3px;height:28px;line-height:27px"><svg class="yi" viewBox="0 0 12 8"><path d="M0 7.5c.8-3.6 2.6-5 5-5.2l-.6 1.8c1.6-2.6 3.8-3.6 7.4-3.8-2.8.9-4.6 2.6-5.6 5.4l.2-2c-2.200 0-4.400 1.200-6.400 3.800z" fill="currentColor"/></svg></div>
<div class="clip c-yg" style="left:920.0px;top:180.0px;width:15.3px;height:28px;line-height:27px"><svg class="yi" viewBox="0 0 12 8"><path d="M0 7.5c.8-3.6 2.6-5 5-5.2l-.6 1.8c1.6-2.6 3.8-3.6 7.4-3.8-2.8.9-4.6 2.6-5.6 5.4l.2-2c-2.200 0-4.400 1.200-6.400 3.800z" fill="currentColor"/></svg></div>
<div class="clip c-yg" style="left:936.0px;top:180.0px;width:15.3px;height:28px;line-height:27px"><svg class="yi" viewBox="0 0 12 8"><path d="M0 7.5c.8-3.6 2.6-5 5-5.2l-.6 1.8c1.6-2.6 3.8-3.6 7.4-3.8-2.8.9-4.6 2.6-5.6 5.4l.2-2c-2.200 0-4.400 1.200-6.400 3.800z" fill="currentColor"/></svg></div>
<div class="clip c-yg" style="left:953.0px;top:180.0px;width:15.3px;height:28px;line-height:27px"><svg class="yi" viewBox="0 0 12 8"><path d="M0 7.5c.8-3.6 2.6-5 5-5.2l-.6 1.8c1.6-2.6 3.8-3.6 7.4-3.8-2.8.9-4.6 2.6-5.6 5.4l.2-2c-2.200 0-4.400 1.200-6.400 3.800z" fill="currentColor"/></svg></div>
<div class="clip c-yg" style="left:969.0px;top:180.0px;width:15.3px;height:28px;line-height:27px"><svg class="yi" viewBox="0 0 12 8"><path d="M0 7.5c.8-3.6 2.6-5 5-5.2l-.6 1.8c1.6-2.6 3.8-3.6 7.4-3.8-2.8.9-4.6 2.6-5.6 5.4l.2-2c-2.200 0-4.400 1.200-6.400 3.800z" fill="currentColor"/></svg></div>
<div class="clip c-yg" style="left:1018.0px;top:180.0px;width:15.3px;height:28px;line-height:27px"><svg class="yi" viewBox="0 0 12 8"><path d="M0 7.5c.8-3.6 2.6-5 5-5.2l-.6 1.8c1.6-2.6 3.8-3.6 7.4-3.8-2.8.9-4.6 2.6-5.6 5.4l.2-2c-2.200 0-4.400 1.200-6.400 3.800z" fill="currentColor"/></svg></div>
<div class="clip c-yg" style="left:1035.0px;top:180.0px;width:15.3px;height:28px;line-height:27px"><svg class="yi" viewBox="0 0 12 8"><path d="M0 7.5c.8-3.6 2.6-5 5-5.2l-.6 1.8c1.6-2.6 3.8-3.6 7.4-3.8-2.8.9-4.6 2.6-5.6 5.4l.2-2c-2.200 0-4.400 1.200-6.400 3.800z" fill="currentColor"/></svg></div>
<div class="clip c-yg" style="left:1051.0px;top:180.0px;width:15.3px;height:28px;line-height:27px"><svg class="yi" viewBox="0 0 12 8"><path d="M0 7.5c.8-3.6 2.6-5 5-5.2l-.6 1.8c1.6-2.6 3.8-3.6 7.4-3.8-2.8.9-4.6 2.6-5.6 5.4l.2-2c-2.200 0-4.400 1.200-6.400 3.800z" fill="currentColor"/></svg></div>
<div class="clip c-yg" style="left:1068.0px;top:180.0px;width:15.3px;height:28px;line-height:27px"><svg class="yi" viewBox="0 0 12 8"><path d="M0 7.5c.8-3.6 2.6-5 5-5.2l-.6 1.8c1.6-2.6 3.8-3.6 7.4-3.8-2.8.9-4.6 2.6-5.6 5.4l.2-2c-2.200 0-4.400 1.200-6.400 3.800z" fill="currentColor"/></svg></div>
<div class="clip c-go" style="left:887.0px;top:180.0px;width:27.0px;height:28px;line-height:27px"><svg class="ai" viewBox="0 0 11 9"><path d="M0 0L3.6 3.1 5 1.6 7 3.6 10.5 4.5 7 5.4 5 7.4 3.6 5.9 0 9z" fill="currentColor"/></svg></div>
<div class="clip c-yg sl" style="left:984.3px;top:181.0px;width:2.5px;height:27px"></div>
<div class="clip c-yg sl o5" style="left:1002.0px;top:181.0px;width:1.5px;height:27px"></div>
<div class="clip c-yg sl" style="left:1014.0px;top:181.0px;width:2.0px;height:27px"></div>
<div class="clip c-fm" style="left:624px;top:208.0px;width:131px"><svg class="ai" viewBox="0 0 11 9"><path d="M0 0L3.6 3.1 5 1.6 7 3.6 10.5 4.5 7 5.4 5 7.4 3.6 5.9 0 9z" fill="currentColor"/></svg><span class="cx" style="transform:scaleX(0.716)">FULL LO..MONKEY)</span></div>
<div class="clip c-fm" style="left:755px;top:208.0px;width:132px"><svg class="ai" viewBox="0 0 11 9"><path d="M0 0L3.6 3.1 5 1.6 7 3.6 10.5 4.5 7 5.4 5 7.4 3.6 5.9 0 9z" fill="currentColor"/></svg><span class="cx" style="transform:scaleX(0.716)">FULL LO..MONKEY)</span></div>
<div class="clip c-p6" style="left:164px;top:238.0px;width:131px"><svg class="pi" viewBox="0 0 10 11"><path d="M0 0h10v11h-10v-2h7v-1.5h-7v-2h7v-1.5h-7z" fill="currentColor"/></svg><span class="cx" style="transform:scaleX(0.889)">Pattern 6</span></div>
<div class="clip c-p6" style="left:427px;top:238.0px;width:131px"><svg class="pi" viewBox="0 0 10 11"><path d="M0 0h10v11h-10v-2h7v-1.5h-7v-2h7v-1.5h-7z" fill="currentColor"/></svg><span class="cx" style="transform:scaleX(0.889)">Pattern 6</span></div>
<div class="clip c-p6" style="left:558px;top:238.0px;width:66px"><svg class="pi" viewBox="0 0 10 11"><path d="M0 0h10v11h-10v-2h7v-1.5h-7v-2h7v-1.5h-7z" fill="currentColor"/></svg><span class="cx" style="transform:scaleX(0.786)">Pat..n 6</span></div>
<div class="clip c-p6" style="left:920px;top:238.0px;width:66px"><svg class="pi" viewBox="0 0 10 11"><path d="M0 0h10v11h-10v-2h7v-1.5h-7v-2h7v-1.5h-7z" fill="currentColor"/></svg><span class="cx" style="transform:scaleX(0.786)">Pat..n 6</span></div>
<div class="clip c-p7 sl" style="left:1002.0px;top:239.0px;width:1.5px;height:29px"></div>
<div class="clip c-p6" style="left:1018px;top:238.0px;width:33px"><svg class="pi" viewBox="0 0 10 11"><path d="M0 0h10v11h-10v-2h7v-1.5h-7v-2h7v-1.5h-7z" fill="currentColor"/></svg></div>
<div class="clip c-p6" style="left:1051px;top:238.0px;width:62px"><svg class="pi" viewBox="0 0 10 11"><path d="M0 0h10v11h-10v-2h7v-1.5h-7v-2h7v-1.5h-7z" fill="currentColor"/></svg><span class="cx" style="transform:scaleX(0.801)">Pa..n 6</span></div>
<div class="clip c-p7" style="left:427px;top:268.0px;width:66px"><svg class="pi" viewBox="0 0 10 11"><path d="M0 0h10v11h-10v-2h7v-1.5h-7v-2h7v-1.5h-7z" fill="currentColor"/></svg><span class="cx" style="transform:scaleX(0.781)">Pat..n 7</span></div>
<div class="clip c-p7" style="left:493px;top:268.0px;width:65px"><svg class="pi" viewBox="0 0 10 11"><path d="M0 0h10v11h-10v-2h7v-1.5h-7v-2h7v-1.5h-7z" fill="currentColor"/></svg><span class="cx" style="transform:scaleX(0.781)">Pat..n 7</span></div>
<div class="clip c-p7" style="left:558px;top:268.0px;width:66px"><svg class="pi" viewBox="0 0 10 11"><path d="M0 0h10v11h-10v-2h7v-1.5h-7v-2h7v-1.5h-7z" fill="currentColor"/></svg><span class="cx" style="transform:scaleX(0.781)">Pat..n 7</span></div>
<div class="clip c-p7" style="left:920px;top:268.0px;width:66px"><svg class="pi" viewBox="0 0 10 11"><path d="M0 0h10v11h-10v-2h7v-1.5h-7v-2h7v-1.5h-7z" fill="currentColor"/></svg><span class="cx" style="transform:scaleX(0.781)">Pat..n 7</span></div>
<div class="clip c-p7 sl" style="left:1002.0px;top:269.0px;width:1.5px;height:29px"></div>
<div class="clip c-p7" style="left:1018px;top:268.0px;width:33px"><svg class="pi" viewBox="0 0 10 11"><path d="M0 0h10v11h-10v-2h7v-1.5h-7v-2h7v-1.5h-7z" fill="currentColor"/></svg></div>
<div class="clip c-p7" style="left:1051px;top:268.0px;width:62px"><svg class="pi" viewBox="0 0 10 11"><path d="M0 0h10v11h-10v-2h7v-1.5h-7v-2h7v-1.5h-7z" fill="currentColor"/></svg><span class="cx" style="transform:scaleX(0.801)">Pa..n 7</span></div>
<div class="clip c-p13" style="left:33px;top:298.0px;width:65px"><svg class="pi" viewBox="0 0 10 11"><path d="M0 0h10v11h-10v-2h7v-1.5h-7v-2h7v-1.5h-7z" fill="currentColor"/></svg><span class="cx" style="transform:scaleX(0.781)">Patt..13</span></div>
<div class="clip c-p13" style="left:98px;top:298.0px;width:66px"><svg class="pi" viewBox="0 0 10 11"><path d="M0 0h10v11h-10v-2h7v-1.5h-7v-2h7v-1.5h-7z" fill="currentColor"/></svg><span class="cx" style="transform:scaleX(0.781)">Patt..13</span></div>
<div class="clip c-p13" style="left:164px;top:298.0px;width:66px"><svg class="pi" viewBox="0 0 10 11"><path d="M0 0h10v11h-10v-2h7v-1.5h-7v-2h7v-1.5h-7z" fill="currentColor"/></svg><span class="cx" style="transform:scaleX(0.781)">Patt..13</span></div>
<div class="clip c-p13" style="left:230px;top:298.0px;width:65px"><svg class="pi" viewBox="0 0 10 11"><path d="M0 0h10v11h-10v-2h7v-1.5h-7v-2h7v-1.5h-7z" fill="currentColor"/></svg><span class="cx" style="transform:scaleX(0.781)">Patt..13</span></div>
<div class="clip c-p14" style="left:295px;top:298.0px;width:132px"><svg class="pi" viewBox="0 0 10 11"><path d="M0 0h10v11h-10v-2h7v-1.5h-7v-2h7v-1.5h-7z" fill="currentColor"/></svg><span class="cx" style="transform:scaleX(0.880)">Pattern 14</span></div>
<div class="clip c-p14" style="left:427px;top:298.0px;width:131px"><svg class="pi" viewBox="0 0 10 11"><path d="M0 0h10v11h-10v-2h7v-1.5h-7v-2h7v-1.5h-7z" fill="currentColor"/></svg><span class="cx" style="transform:scaleX(0.880)">Pattern 14</span></div>
<div class="clip c-p14" style="left:558px;top:298.0px;width:66px"><svg class="pi" viewBox="0 0 10 11"><path d="M0 0h10v11h-10v-2h7v-1.5h-7v-2h7v-1.5h-7z" fill="currentColor"/></svg><span class="cx" style="transform:scaleX(0.786)">Patt..14</span></div>
<div class="clip c-p18" style="left:624px;top:298.0px;width:131px"><svg class="pi" viewBox="0 0 10 11"><path d="M0 0h10v11h-10v-2h7v-1.5h-7v-2h7v-1.5h-7z" fill="currentColor"/></svg><span class="cx" style="transform:scaleX(0.889)">Pattern 18</span></div>
<div class="clip c-p18" style="left:755px;top:298.0px;width:132px"><svg class="pi" viewBox="0 0 10 11"><path d="M0 0h10v11h-10v-2h7v-1.5h-7v-2h7v-1.5h-7z" fill="currentColor"/></svg><span class="cx" style="transform:scaleX(0.889)">Pattern 18</span></div>
<div class="clip c-p14" style="left:920px;top:298.0px;width:66px"><svg class="pi" viewBox="0 0 10 11"><path d="M0 0h10v11h-10v-2h7v-1.5h-7v-2h7v-1.5h-7z" fill="currentColor"/></svg><span class="cx" style="transform:scaleX(0.786)">Patt..14</span></div>
<div class="clip c-p14 sl" style="left:1002.0px;top:299.0px;width:1.5px;height:29px"></div>
<div class="clip c-p14" style="left:1018px;top:298.0px;width:33px"><svg class="pi" viewBox="0 0 10 11"><path d="M0 0h10v11h-10v-2h7v-1.5h-7v-2h7v-1.5h-7z" fill="currentColor"/></svg></div>
<div class="clip c-p14" style="left:1051px;top:298.0px;width:66px"><svg class="pi" viewBox="0 0 10 11"><path d="M0 0h10v11h-10v-2h7v-1.5h-7v-2h7v-1.5h-7z" fill="currentColor"/></svg><span class="cx" style="transform:scaleX(0.786)">Patt..14</span></div>
<div class="clip c-p17" style="left:131px;top:328.0px;width:33px"><svg class="pi" viewBox="0 0 10 11"><path d="M0 0h10v11h-10v-2h7v-1.5h-7v-2h7v-1.5h-7z" fill="currentColor"/></svg></div>
<div class="clip c-p17" style="left:263px;top:328.0px;width:32px"><svg class="pi" viewBox="0 0 10 11"><path d="M0 0h10v11h-10v-2h7v-1.5h-7v-2h7v-1.5h-7z" fill="currentColor"/></svg></div>
<div class="clip c-p17" style="left:887px;top:328.0px;width:33px"><svg class="pi" viewBox="0 0 10 11"><path d="M0 0h10v11h-10v-2h7v-1.5h-7v-2h7v-1.5h-7z" fill="currentColor"/></svg></div>
<div class="clip c-p11" style="left:24px;top:358.0px;width:132px"><svg class="pi" viewBox="0 0 10 11"><path d="M0 0h10v11h-10v-2h7v-1.5h-7v-2h7v-1.5h-7z" fill="currentColor"/></svg><span class="cx" style="transform:scaleX(0.893)">Pattern 11</span></div>
<div class="clip c-p11" style="left:418.5px;top:358.0px;width:139.0px"><svg class="pi" viewBox="0 0 10 11"><path d="M0 0h10v11h-10v-2h7v-1.5h-7v-2h7v-1.5h-7z" fill="currentColor"/></svg><span class="cx" style="transform:scaleX(0.893)">Pattern 11</span></div>
<div class="clip c-p11" style="left:912px;top:358.0px;width:74px"><svg class="pi" viewBox="0 0 10 11"><path d="M0 0h10v11h-10v-2h7v-1.5h-7v-2h7v-1.5h-7z" fill="currentColor"/></svg><span class="cx" style="transform:scaleX(0.903)">Patt..11</span></div>
<div class="clip c-p11" style="left:1018px;top:358.0px;width:25px"><svg class="pi" viewBox="0 0 10 11"><path d="M0 0h10v11h-10v-2h7v-1.5h-7v-2h7v-1.5h-7z" fill="currentColor"/></svg></div>
<div class="clip c-p11" style="left:1043px;top:358.0px;width:66px"><svg class="pi" viewBox="0 0 10 11"><path d="M0 0h10v11h-10v-2h7v-1.5h-7v-2h7v-1.5h-7z" fill="currentColor"/></svg><span class="cx" style="transform:scaleX(0.801)">Patt..11</span></div>
<div class="clip c-p12" style="left:101px;top:388.0px;width:130px"><svg class="pi" viewBox="0 0 10 11"><path d="M0 0h10v11h-10v-2h7v-1.5h-7v-2h7v-1.5h-7z" fill="currentColor"/></svg><span class="cx" style="transform:scaleX(0.844)">Pattern 12</span></div>
<div class="clip c-p12" style="left:231px;top:388.0px;width:132px"><svg class="pi" viewBox="0 0 10 11"><path d="M0 0h10v11h-10v-2h7v-1.5h-7v-2h7v-1.5h-7z" fill="currentColor"/></svg><span class="cx" style="transform:scaleX(0.844)">Pattern 12</span></div>
<div class="clip c-p12" style="left:363px;top:388.0px;width:131px"><svg class="pi" viewBox="0 0 10 11"><path d="M0 0h10v11h-10v-2h7v-1.5h-7v-2h7v-1.5h-7z" fill="currentColor"/></svg><span class="cx" style="transform:scaleX(0.844)">Pattern 12</span></div>
<div class="clip c-p12" style="left:494px;top:388.0px;width:64px"><svg class="pi" viewBox="0 0 10 11"><path d="M0 0h10v11h-10v-2h7v-1.5h-7v-2h7v-1.5h-7z" fill="currentColor"/></svg><span class="cx" style="transform:scaleX(0.828)">Pat..12</span></div>
<div class="clip c-p12" style="left:558px;top:388.0px;width:50px"><svg class="pi" viewBox="0 0 10 11"><path d="M0 0h10v11h-10v-2h7v-1.5h-7v-2h7v-1.5h-7z" fill="currentColor"/></svg><span class="cx" style="transform:scaleX(0.789)">Pa..2</span></div>
<div class="clip c-p12" style="left:920px;top:388.0px;width:66px"><svg class="pi" viewBox="0 0 10 11"><path d="M0 0h10v11h-10v-2h7v-1.5h-7v-2h7v-1.5h-7z" fill="currentColor"/></svg><span class="cx" style="transform:scaleX(0.748)">Patt..12</span></div>
<div class="clip c-p12 sl" style="left:1002.0px;top:389.0px;width:1.5px;height:29px"></div>
<div class="clip c-p12" style="left:1018px;top:388.0px;width:33px"><svg class="pi" viewBox="0 0 10 11"><path d="M0 0h10v11h-10v-2h7v-1.5h-7v-2h7v-1.5h-7z" fill="currentColor"/></svg></div>
<div class="clip c-p12" style="left:1051px;top:388.0px;width:50px"><svg class="pi" viewBox="0 0 10 11"><path d="M0 0h10v11h-10v-2h7v-1.5h-7v-2h7v-1.5h-7z" fill="currentColor"/></svg><span class="cx" style="transform:scaleX(0.789)">Pa..2</span></div>
<div class="clip c-p15" style="left:427px;top:418.0px;width:131px"><svg class="pi" viewBox="0 0 10 11"><path d="M0 0h10v11h-10v-2h7v-1.5h-7v-2h7v-1.5h-7z" fill="currentColor"/></svg><span class="cx" style="transform:scaleX(0.884)">Pattern 15</span></div>
<div class="clip c-p15" style="left:558px;top:418.0px;width:66px"><svg class="pi" viewBox="0 0 10 11"><path d="M0 0h10v11h-10v-2h7v-1.5h-7v-2h7v-1.5h-7z" fill="currentColor"/></svg><span class="cx" style="transform:scaleX(0.769)">Patt..15</span></div>
<div class="clip c-p15" style="left:920px;top:418.0px;width:66px"><svg class="pi" viewBox="0 0 10 11"><path d="M0 0h10v11h-10v-2h7v-1.5h-7v-2h7v-1.5h-7z" fill="currentColor"/></svg><span class="cx" style="transform:scaleX(0.769)">Patt..15</span></div>
<div class="clip c-p15" style="left:1018px;top:418.0px;width:33px"><svg class="pi" viewBox="0 0 10 11"><path d="M0 0h10v11h-10v-2h7v-1.5h-7v-2h7v-1.5h-7z" fill="currentColor"/></svg></div>
<div class="clip c-p15" style="left:1051px;top:418.0px;width:62px"><svg class="pi" viewBox="0 0 10 11"><path d="M0 0h10v11h-10v-2h7v-1.5h-7v-2h7v-1.5h-7z" fill="currentColor"/></svg><span class="cx" style="transform:scaleX(0.801)">Pat..15</span></div>
<div class="clip c-p16" style="left:295px;top:448.0px;width:132px"><svg class="pi" viewBox="0 0 10 11"><path d="M0 0h10v11h-10v-2h7v-1.5h-7v-2h7v-1.5h-7z" fill="currentColor"/></svg><span class="cx" style="transform:scaleX(0.880)">Pattern 16</span></div>
<div class="clip c-p16" style="left:427px;top:448.0px;width:131px"><svg class="pi" viewBox="0 0 10 11"><path d="M0 0h10v11h-10v-2h7v-1.5h-7v-2h7v-1.5h-7z" fill="currentColor"/></svg><span class="cx" style="transform:scaleX(0.880)">Pattern 16</span></div>
<div class="clip c-p16" style="left:558px;top:448.0px;width:32px"><svg class="pi" viewBox="0 0 10 11"><path d="M0 0h10v11h-10v-2h7v-1.5h-7v-2h7v-1.5h-7z" fill="currentColor"/></svg></div>
<div class="clip c-p16" style="left:624px;top:448.0px;width:131px"><svg class="pi" viewBox="0 0 10 11"><path d="M0 0h10v11h-10v-2h7v-1.5h-7v-2h7v-1.5h-7z" fill="currentColor"/></svg><span class="cx" style="transform:scaleX(0.880)">Pattern 16</span></div>
<div class="clip c-p16" style="left:755px;top:448.0px;width:132px"><svg class="pi" viewBox="0 0 10 11"><path d="M0 0h10v11h-10v-2h7v-1.5h-7v-2h7v-1.5h-7z" fill="currentColor"/></svg><span class="cx" style="transform:scaleX(0.880)">Pattern 16</span></div>
<div class="clip c-p16" style="left:920px;top:448.0px;width:66px"><svg class="pi" viewBox="0 0 10 11"><path d="M0 0h10v11h-10v-2h7v-1.5h-7v-2h7v-1.5h-7z" fill="currentColor"/></svg><span class="cx" style="transform:scaleX(0.769)">Patt..16</span></div>
<div class="clip c-p16 sl o5" style="left:1002.0px;top:449.0px;width:1.5px;height:29px"></div>
<div class="clip c-p16 sl o5" style="left:1014.0px;top:449.0px;width:2.0px;height:29px"></div>
<div class="clip c-p16" style="left:1018px;top:448.0px;width:33px"><svg class="pi" viewBox="0 0 10 11"><path d="M0 0h10v11h-10v-2h7v-1.5h-7v-2h7v-1.5h-7z" fill="currentColor"/></svg></div>
<div class="clip c-p16" style="left:1051px;top:448.0px;width:66px"><svg class="pi" viewBox="0 0 10 11"><path d="M0 0h10v11h-10v-2h7v-1.5h-7v-2h7v-1.5h-7z" fill="currentColor"/></svg><span class="cx" style="transform:scaleX(0.769)">Patt..16</span></div>
<div class="clip c-p24" style="left:33px;top:478.0px;width:65px"><svg class="pi" viewBox="0 0 10 11"><path d="M0 0h10v11h-10v-2h7v-1.5h-7v-2h7v-1.5h-7z" fill="currentColor"/></svg><span class="cx" style="transform:scaleX(0.782)">Patt..24</span></div>
<div class="clip c-p24" style="left:98px;top:478.0px;width:66px"><svg class="pi" viewBox="0 0 10 11"><path d="M0 0h10v11h-10v-2h7v-1.5h-7v-2h7v-1.5h-7z" fill="currentColor"/></svg><span class="cx" style="transform:scaleX(0.782)">Patt..24</span></div>
<div class="clip c-p25" style="left:624px;top:508.0px;width:131px"><svg class="pi" viewBox="0 0 10 11"><path d="M0 0h10v11h-10v-2h7v-1.5h-7v-2h7v-1.5h-7z" fill="currentColor"/></svg><span class="cx" style="transform:scaleX(0.874)">Pattern 25</span></div>
<div class="clip c-p25" style="left:755px;top:508.0px;width:132px"><svg class="pi" viewBox="0 0 10 11"><path d="M0 0h10v11h-10v-2h7v-1.5h-7v-2h7v-1.5h-7z" fill="currentColor"/></svg><span class="cx" style="transform:scaleX(0.874)">Pattern 25</span></div>
<div class="clip c-p25" style="left:920px;top:508.0px;width:66px"><svg class="pi" viewBox="0 0 10 11"><path d="M0 0h10v11h-10v-2h7v-1.5h-7v-2h7v-1.5h-7z" fill="currentColor"/></svg><span class="cx" style="transform:scaleX(0.776)">Patt..25</span></div>
<div class="clip c-p25 sl" style="left:1002.0px;top:509.0px;width:1.5px;height:29px"></div>
<div class="clip c-p25" style="left:1018px;top:508.0px;width:33px"><svg class="pi" viewBox="0 0 10 11"><path d="M0 0h10v11h-10v-2h7v-1.5h-7v-2h7v-1.5h-7z" fill="currentColor"/></svg></div>
<div class="clip c-p25" style="left:1051px;top:508.0px;width:66px"><svg class="pi" viewBox="0 0 10 11"><path d="M0 0h10v11h-10v-2h7v-1.5h-7v-2h7v-1.5h-7z" fill="currentColor"/></svg><span class="cx" style="transform:scaleX(0.776)">Patt..25</span></div>
<div class="clip c-p26" style="left:682px;top:538.0px;width:130px"><svg class="pi" viewBox="0 0 10 11"><path d="M0 0h10v11h-10v-2h7v-1.5h-7v-2h7v-1.5h-7z" fill="currentColor"/></svg><span class="cx" style="transform:scaleX(0.878)">Pattern 26</span></div>
<div class="clip c-p26" style="left:813px;top:538.0px;width:64px"><svg class="pi" viewBox="0 0 10 11"><path d="M0 0h10v11h-10v-2h7v-1.5h-7v-2h7v-1.5h-7z" fill="currentColor"/></svg><span class="cx" style="transform:scaleX(0.769)">Patt..26</span></div>
<div class="clip c-p27" style="left:427px;top:568.0px;width:66px"><svg class="pi" viewBox="0 0 10 11"><path d="M0 0h10v11h-10v-2h7v-1.5h-7v-2h7v-1.5h-7z" fill="currentColor"/></svg><span class="cx" style="transform:scaleX(0.769)">Patt..27</span></div>
<div class="clip c-p27" style="left:493px;top:568.0px;width:65px"><svg class="pi" viewBox="0 0 10 11"><path d="M0 0h10v11h-10v-2h7v-1.5h-7v-2h7v-1.5h-7z" fill="currentColor"/></svg><span class="cx" style="transform:scaleX(0.769)">Patt..27</span></div>
<div class="clip c-p27" style="left:558px;top:568.0px;width:66px"><svg class="pi" viewBox="0 0 10 11"><path d="M0 0h10v11h-10v-2h7v-1.5h-7v-2h7v-1.5h-7z" fill="currentColor"/></svg><span class="cx" style="transform:scaleX(0.769)">Patt..28</span></div>
<div class="clip c-p27" style="left:920px;top:568.0px;width:66px"><svg class="pi" viewBox="0 0 10 11"><path d="M0 0h10v11h-10v-2h7v-1.5h-7v-2h7v-1.5h-7z" fill="currentColor"/></svg><span class="cx" style="transform:scaleX(0.769)">Patt..27</span></div>
<div class="clip c-p27 sl" style="left:985.0px;top:569.0px;width:2.5px;height:29px"></div>
<div class="clip c-p27 sl" style="left:1002.0px;top:569.0px;width:1.5px;height:29px"></div>
<div class="clip c-p27 sl" style="left:1014.0px;top:569.0px;width:2.5px;height:29px"></div>
<div class="clip c-p27" style="left:1018px;top:568.0px;width:33px"><svg class="pi" viewBox="0 0 10 11"><path d="M0 0h10v11h-10v-2h7v-1.5h-7v-2h7v-1.5h-7z" fill="currentColor"/></svg></div>
<div class="clip c-p27" style="left:1051px;top:568.0px;width:66px"><svg class="pi" viewBox="0 0 10 11"><path d="M0 0h10v11h-10v-2h7v-1.5h-7v-2h7v-1.5h-7z" fill="currentColor"/></svg><span class="cx" style="transform:scaleX(0.769)">Patt..28</span></div>
<div class="clip c-go" style="left:33px;top:598.0px;width:27px"><svg class="ai" viewBox="0 0 11 9"><path d="M0 0L3.6 3.1 5 1.6 7 3.6 10.5 4.5 7 5.4 5 7.4 3.6 5.9 0 9z" fill="currentColor"/></svg></div>
<div class="clip c-go" style="left:164px;top:598.0px;width:28px"><svg class="ai" viewBox="0 0 11 9"><path d="M0 0L3.6 3.1 5 1.6 7 3.6 10.5 4.5 7 5.4 5 7.4 3.6 5.9 0 9z" fill="currentColor"/></svg></div>
<div class="clip c-go" style="left:295px;top:598.0px;width:28px"><svg class="ai" viewBox="0 0 11 9"><path d="M0 0L3.6 3.1 5 1.6 7 3.6 10.5 4.5 7 5.4 5 7.4 3.6 5.9 0 9z" fill="currentColor"/></svg></div>
<div class="clip c-go" style="left:427px;top:598.0px;width:27px"><svg class="ai" viewBox="0 0 11 9"><path d="M0 0L3.6 3.1 5 1.6 7 3.6 10.5 4.5 7 5.4 5 7.4 3.6 5.9 0 9z" fill="currentColor"/></svg></div>
<div class="clip c-go" style="left:558px;top:598.0px;width:28px"><svg class="ai" viewBox="0 0 11 9"><path d="M0 0L3.6 3.1 5 1.6 7 3.6 10.5 4.5 7 5.4 5 7.4 3.6 5.9 0 9z" fill="currentColor"/></svg></div>
<div class="clip c-go" style="left:624px;top:598.0px;width:28px"><svg class="ai" viewBox="0 0 11 9"><path d="M0 0L3.6 3.1 5 1.6 7 3.6 10.5 4.5 7 5.4 5 7.4 3.6 5.9 0 9z" fill="currentColor"/></svg></div>
<div class="clip c-go" style="left:755px;top:598.0px;width:28px"><svg class="ai" viewBox="0 0 11 9"><path d="M0 0L3.6 3.1 5 1.6 7 3.6 10.5 4.5 7 5.4 5 7.4 3.6 5.9 0 9z" fill="currentColor"/></svg></div>
<div class="clip c-go" style="left:821px;top:598.0px;width:28px"><svg class="ai" viewBox="0 0 11 9"><path d="M0 0L3.6 3.1 5 1.6 7 3.6 10.5 4.5 7 5.4 5 7.4 3.6 5.9 0 9z" fill="currentColor"/></svg></div>
<div class="clip c-go" style="left:920px;top:598.0px;width:27px"><svg class="ai" viewBox="0 0 11 9"><path d="M0 0L3.6 3.1 5 1.6 7 3.6 10.5 4.5 7 5.4 5 7.4 3.6 5.9 0 9z" fill="currentColor"/></svg></div>
<div class="clip c-go" style="left:1051px;top:598.0px;width:28px"><svg class="ai" viewBox="0 0 11 9"><path d="M0 0L3.6 3.1 5 1.6 7 3.6 10.5 4.5 7 5.4 5 7.4 3.6 5.9 0 9z" fill="currentColor"/></svg></div>
<div class="clip c-red" style="left:33px;top:628.0px;width:14px"><svg class="ai" viewBox="0 0 11 9"><path d="M0 0L3.6 3.1 5 1.6 7 3.6 10.5 4.5 7 5.4 5 7.4 3.6 5.9 0 9z" fill="currentColor"/></svg></div>
<div class="clip c-red" style="left:624px;top:628.0px;width:14px"><svg class="ai" viewBox="0 0 11 9"><path d="M0 0L3.6 3.1 5 1.6 7 3.6 10.5 4.5 7 5.4 5 7.4 3.6 5.9 0 9z" fill="currentColor"/></svg></div>
<div class="clip c-red" style="left:1117px;top:628.0px;width:14px"><svg class="ai" viewBox="0 0 11 9"><path d="M0 0L3.6 3.1 5 1.6 7 3.6 10.5 4.5 7 5.4 5 7.4 3.6 5.9 0 9z" fill="currentColor"/></svg></div>
<div class="clip c-ris" style="left:11.9px;top:658.0px;width:66.5px"><svg class="ai" viewBox="0 0 11 9"><path d="M0 0L3.6 3.1 5 1.6 7 3.6 10.5 4.5 7 5.4 5 7.4 3.6 5.9 0 9z" fill="currentColor"/></svg><span class="cx" style="transform:scaleX(0.772)">Ris..FX]</span></div>
<div class="clip c-ris" style="left:611.2px;top:658.0px;width:66.5px"><svg class="ai" viewBox="0 0 11 9"><path d="M0 0L3.6 3.1 5 1.6 7 3.6 10.5 4.5 7 5.4 5 7.4 3.6 5.9 0 9z" fill="currentColor"/></svg><span class="cx" style="transform:scaleX(0.772)">Ris..FX]</span></div>
<div class="clip c-ris" style="left:897.9px;top:658.0px;width:66.5px"><svg class="ai" viewBox="0 0 11 9"><path d="M0 0L3.6 3.1 5 1.6 7 3.6 10.5 4.5 7 5.4 5 7.4 3.6 5.9 0 9z" fill="currentColor"/></svg><span class="cx" style="transform:scaleX(0.772)">Ris..FX]</span></div>
<div class="clip c-hw" style="left:1117.0px;top:688.0px;width:56.5px"><svg class="ai" viewBox="0 0 11 9"><path d="M0 0L3.6 3.1 5 1.6 7 3.6 10.5 4.5 7 5.4 5 7.4 3.6 5.9 0 9z" fill="currentColor"/></svg><span class="cx" style="transform:scaleX(0.897)">H..wl</span></div>
<div class="clip c-cym" style="left:0.5px;top:718.0px;width:60.0px"><svg class="ai" viewBox="0 0 11 9"><path d="M0 0L3.6 3.1 5 1.6 7 3.6 10.5 4.5 7 5.4 5 7.4 3.6 5.9 0 9z" fill="currentColor"/></svg><span class="cx" style="transform:scaleX(0.779)">Cym..2</span></div>
<div class="clip c-cym" style="left:887.0px;top:718.0px;width:60.5px"><svg class="ai" viewBox="0 0 11 9"><path d="M0 0L3.6 3.1 5 1.6 7 3.6 10.5 4.5 7 5.4 5 7.4 3.6 5.9 0 9z" fill="currentColor"/></svg><span class="cx" style="transform:scaleX(0.779)">Cym..2</span></div>
<div class="clip c-t26" style="left:227.9px;top:748.0px;width:30.1px"><svg class="ai" viewBox="0 0 11 9"><path d="M0 0L3.6 3.1 5 1.6 7 3.6 10.5 4.5 7 5.4 5 7.4 3.6 5.9 0 9z" fill="currentColor"/></svg></div>
<div class="clip c-t26" style="left:753.8px;top:748.0px;width:30.0px"><svg class="ai" viewBox="0 0 11 9"><path d="M0 0L3.6 3.1 5 1.6 7 3.6 10.5 4.5 7 5.4 5 7.4 3.6 5.9 0 9z" fill="currentColor"/></svg></div>
<div class="clip c-t27" style="left:0px;top:778.0px;width:33px"><svg class="ai" viewBox="0 0 11 9"><path d="M0 0L3.6 3.1 5 1.6 7 3.6 10.5 4.5 7 5.4 5 7.4 3.6 5.9 0 9z" fill="currentColor"/></svg></div>
<div class="clip c-t27" style="left:887px;top:778.0px;width:33px"><svg class="ai" viewBox="0 0 11 9"><path d="M0 0L3.6 3.1 5 1.6 7 3.6 10.5 4.5 7 5.4 5 7.4 3.6 5.9 0 9z" fill="currentColor"/></svg></div>
<div id="wm"><div class="w1" style="transform:scaleX(1.026)">Activar Windows</div><div class="w2" style="transform:scaleX(1.020)">Ve a Configuración para activar Windows.</div></div>
</div>
<div id="ttl">
<span class="abs ttx" style="left:352px;top:5px;transform:scaleX(1.106)">Playlist - Arrangement</span><b class="abs tri" style="left:527px;top:10px"></b><span class="abs ttx" style="left:540px;top:5px;transform:scaleX(1.020)">FM_fx_bass_sweep_down_E</span><b class="abs tri" style="left:752px;top:10px"></b>
<svg class="abs" style="left:0;top:0" width="350" height="30" viewBox="0 102 350 30">
<g fill="#dfe4e7">
<path d="M15 112.3l6 5.3-6 5.400z"/>
<path d="M35.5 125.6V116a8.2 8.2 0 0 1 16.400 0v9.6h-5.2V116a3 3 0 0 0-6 0v9.6z"/>
<path d="M152.700 114.5h3.8l5.2-5.2v17.5l-5.2-5.3h-3.8z"/>
<path d="M179.6 117.5l6.8-7.5v4.8h5.2V110l6.8 7.5-6.8 7.5v-4.8h-5.2V125z"/>
<path d="M206.400 109.3h9.8l-4.3 10z" opacity=".85"/>
<path d="M217.5 109.8h3.5c2.5 0 4.2 2 4.2 4.5v12.2h-5.5c-1.8-2.2-3.6-5.6-3.6-9z"/>
<path d="M286.3 114.5h3.8l5.700-5.8v18.5l-5.700-5.8h-3.8z"/>
<path d="M337 112.8l6 5-6 5z"/>
</g>
<g fill="#40484f"><path d="M36.8 121.6h2.6v2.8h-2.6zM48 121.6h2.6v2.8h-2.6z"/><circle cx="221" cy="117" r="1.2"/></g>
<g fill="none" stroke="#dfe4e7" stroke-width="1.700">
<path d="M75 114.5l5.5-4.5 10 11-.5 4.5-5 .5-10-11.5z" stroke-width="1.5"/><path d="M77.5 112.5l10 11.5M80.5 110.5l9.5 11" stroke-width="1.100"/>
<circle cx="135.6" cy="117.6" r="7.2"/><path d="M130.6 122.8l10-10.400"/>
<path d="M165 114.5l6 6m0-6l-6 6" stroke-width="1.6"/>
<path d="M235.2 114.5v-2.5a2 2 0 0 1 2-2h2.8M245.5 110h2.8a2 2 0 0 1 2 2v2.5M250.3 120.5v2.5a2 2 0 0 1-2 2h-2.8M240 125h-2.8a2 2 0 0 1-2-2v-2.5" stroke-width="2"/>
<circle cx="267.3" cy="116" r="6.5"/><path d="M272 121l5.5 5" stroke-width="2.6" stroke-linecap="round"/><path d="M264.8 118.5l4.5-4.8" stroke-width="2.3"/>
<path d="M299.5 112v11.5M303.3 112v11.5" stroke-width="2"/>
<path d="M325.3 114.3h3.8l5-5v17l-5-5h-3.8z" stroke-width="1.400"/>
</g>
<g fill="#6cc0f0"><path d="M100 110.3l5.5-1.8 1.3 1.3 1.2-1.5 2.6 2.6 3 5.8-6.5 3.700-1.6-.8-3.5 6.3h-3.3l1.5-8.5-1.700-1z"/><path d="M110.5 118.5l5.3 4.2a2.3 2.3 0 1 1-2.3 2.5l-5-4.5z"/></g>
<circle cx="115.8" cy="124.6" r=".9" fill="#40484f"/>
</svg>
<svg class="abs" style="left:1610px;top:8px" width="60" height="16" viewBox="0 0 60 16"><path d="M5 4.5h9" stroke="#e6eaed" stroke-width="2.6"/><path d="M26.5 5.5h8v7.5h-8z" fill="none" stroke="#e6eaed" stroke-width="1.400"/><path d="M26.5 6.3h8" stroke="#e6eaed" stroke-width="2"/><path d="M29 5.5v-2.5h8v7.5h-2.5" fill="none" stroke="#e6eaed" stroke-width="1.3"/><path d="M48.5 2.5l9.5 10M58 2.5l-9.5 10" stroke="#e6eaed" stroke-width="1.900"/></svg>

</div>
<div id="ovb" class="sbb2" style="left:342px"><svg width="23" height="24" viewBox="0 0 23 24"><path d="M14 6.5l-6 5.5 6 5.5" fill="none" stroke="#262d33" stroke-width="1.6"/></svg></div>
<div id="ov">
<i style="left:258.4px;top:-0.5px;width:57.4px;height:1.4px;background:#d07a22"></i><i style="left:373.1px;top:-0.5px;width:57.4px;height:1.4px;background:#d07a22"></i><i style="left:487.8px;top:-0.5px;width:43.0px;height:1.4px;background:#d07a22"></i><i style="left:803.4px;top:-0.5px;width:57.4px;height:1.4px;background:#d07a22"></i><i style="left:918.2px;top:-0.5px;width:43.0px;height:1.4px;background:#d07a22"></i><i style="left:885.7px;top:-0.5px;width:2.8px;height:1.4px;background:#7d6c9c"></i><i style="left:315.7px;top:0.4px;width:57.4px;height:1.4px;background:#d8b050"></i><i style="left:430.5px;top:0.4px;width:57.4px;height:1.4px;background:#d8b050"></i><i style="left:803.6px;top:0.4px;width:11.8px;height:1.4px;background:#c03030"></i><i style="left:860.3px;top:0.4px;width:2.2px;height:1.4px;background:#d8b050"></i><i style="left:874.7px;top:0.4px;width:2.2px;height:1.4px;background:#d8b050"></i><i style="left:889.5px;top:0.4px;width:28.7px;height:1.4px;background:#d8b050"></i><i style="left:28.9px;top:1.3px;width:57.4px;height:1.4px;background:#4a38c8"></i><i style="left:86.2px;top:1.3px;width:57.4px;height:1.4px;background:#4a38c8"></i><i style="left:143.6px;top:1.3px;width:57.4px;height:1.4px;background:#4a38c8"></i><i style="left:201.0px;top:1.3px;width:43.0px;height:1.4px;background:#4a38c8"></i><i style="left:717.3px;top:1.3px;width:43.0px;height:1.4px;background:#4a38c8"></i><i style="left:860.8px;top:1.3px;width:14.3px;height:1.4px;background:#c09828"></i><i style="left:875.2px;top:1.3px;width:3.1px;height:1.4px;background:#c09828"></i><i style="left:878.7px;top:1.3px;width:6.5px;height:1.4px;background:#c09828"></i><i style="left:885.7px;top:1.3px;width:3.1px;height:1.4px;background:#c09828"></i><i style="left:889.2px;top:1.3px;width:23.1px;height:1.4px;background:#c09828"></i><i style="left:244.0px;top:2.2px;width:13.6px;height:1.4px;background:#6e7e6e"></i><i style="left:530.9px;top:2.2px;width:13.6px;height:1.4px;background:#6e7e6e"></i><i style="left:760.4px;top:2.2px;width:13.6px;height:1.4px;background:#6e7e6e"></i><i style="left:961.2px;top:2.2px;width:13.6px;height:1.4px;background:#6e7e6e"></i><i style="left:660.0px;top:3.1px;width:57.4px;height:1.4px;background:#a898e0"></i><i style="left:875.1px;top:3.1px;width:13.6px;height:1.4px;background:#6e8882"></i><i style="left:143.6px;top:4.9px;width:12.9px;height:1.4px;background:#c4e070"></i><i style="left:157.6px;top:4.9px;width:12.9px;height:1.4px;background:#c4e070"></i><i style="left:172.4px;top:4.9px;width:12.9px;height:1.4px;background:#c4e070"></i><i style="left:186.4px;top:4.9px;width:12.9px;height:1.4px;background:#c4e070"></i><i style="left:201.2px;top:4.9px;width:12.9px;height:1.4px;background:#c4e070"></i><i style="left:215.2px;top:4.9px;width:12.9px;height:1.4px;background:#c4e070"></i><i style="left:230.0px;top:4.9px;width:12.9px;height:1.4px;background:#c4e070"></i><i style="left:373.2px;top:4.9px;width:12.9px;height:1.4px;background:#c4e070"></i><i style="left:387.2px;top:4.9px;width:12.9px;height:1.4px;background:#c4e070"></i><i style="left:402.0px;top:4.9px;width:12.9px;height:1.4px;background:#c4e070"></i><i style="left:416.0px;top:4.9px;width:12.9px;height:1.4px;background:#c4e070"></i><i style="left:430.8px;top:4.9px;width:12.9px;height:1.4px;background:#c4e070"></i><i style="left:444.8px;top:4.9px;width:12.9px;height:1.4px;background:#c4e070"></i><i style="left:458.8px;top:4.9px;width:12.9px;height:1.4px;background:#c4e070"></i><i style="left:473.6px;top:4.9px;width:12.9px;height:1.4px;background:#c4e070"></i><i style="left:487.6px;top:4.9px;width:12.9px;height:1.4px;background:#c4e070"></i><i style="left:502.4px;top:4.9px;width:12.9px;height:1.4px;background:#c4e070"></i><i style="left:803.6px;top:4.9px;width:12.9px;height:1.4px;background:#c4e070"></i><i style="left:817.6px;top:4.9px;width:12.9px;height:1.4px;background:#c4e070"></i><i style="left:832.4px;top:4.9px;width:12.9px;height:1.4px;background:#c4e070"></i><i style="left:846.4px;top:4.9px;width:12.9px;height:1.4px;background:#c4e070"></i><i style="left:889.2px;top:4.9px;width:12.9px;height:1.4px;background:#c4e070"></i><i style="left:904.0px;top:4.9px;width:12.9px;height:1.4px;background:#c4e070"></i><i style="left:918.0px;top:4.9px;width:12.9px;height:1.4px;background:#c4e070"></i><i style="left:932.8px;top:4.9px;width:12.9px;height:1.4px;background:#c4e070"></i><i style="left:774.8px;top:4.9px;width:23.1px;height:1.4px;background:#c09828"></i><i style="left:859.3px;top:4.9px;width:2.2px;height:1.4px;background:#c4e070"></i><i style="left:874.7px;top:4.9px;width:1.3px;height:1.4px;background:#c4e070"></i><i style="left:885.2px;top:4.9px;width:1.7px;height:1.4px;background:#c4e070"></i><i style="left:545.2px;top:5.8px;width:114.7px;height:1.4px;background:#7c7090"></i><i style="left:660.0px;top:5.8px;width:114.7px;height:1.4px;background:#7c7090"></i><i style="left:143.6px;top:6.7px;width:114.7px;height:1.4px;background:#d0d6dc"></i><i style="left:373.1px;top:6.7px;width:114.7px;height:1.4px;background:#d0d6dc"></i><i style="left:487.8px;top:6.7px;width:57.4px;height:1.4px;background:#d0d6dc"></i><i style="left:803.4px;top:6.7px;width:57.4px;height:1.4px;background:#d0d6dc"></i><i style="left:874.7px;top:6.7px;width:1.3px;height:1.4px;background:#eef0f2"></i><i style="left:889.5px;top:6.7px;width:28.7px;height:1.4px;background:#d0d6dc"></i><i style="left:918.2px;top:6.7px;width:53.8px;height:1.4px;background:#d0d6dc"></i><i style="left:373.1px;top:7.6px;width:57.4px;height:1.4px;background:#eef0f2"></i><i style="left:430.5px;top:7.6px;width:57.4px;height:1.4px;background:#eef0f2"></i><i style="left:487.8px;top:7.6px;width:57.4px;height:1.4px;background:#eef0f2"></i><i style="left:803.4px;top:7.6px;width:57.4px;height:1.4px;background:#eef0f2"></i><i style="left:874.7px;top:7.6px;width:1.3px;height:1.4px;background:#eef0f2"></i><i style="left:889.5px;top:7.6px;width:28.7px;height:1.4px;background:#eef0f2"></i><i style="left:918.2px;top:7.6px;width:53.8px;height:1.4px;background:#eef0f2"></i><i style="left:28.9px;top:8.5px;width:57.4px;height:1.4px;background:#a0e878"></i><i style="left:86.2px;top:8.5px;width:57.4px;height:1.4px;background:#a0e878"></i><i style="left:143.6px;top:8.5px;width:57.4px;height:1.4px;background:#a0e878"></i><i style="left:201.0px;top:8.5px;width:57.4px;height:1.4px;background:#a0e878"></i><i style="left:258.4px;top:8.5px;width:114.7px;height:1.4px;background:#3a9a3a"></i><i style="left:373.1px;top:8.5px;width:114.7px;height:1.4px;background:#3a9a3a"></i><i style="left:487.8px;top:8.5px;width:57.4px;height:1.4px;background:#3a9a3a"></i><i style="left:545.2px;top:8.5px;width:114.7px;height:1.4px;background:#4f9a30"></i><i style="left:660.0px;top:8.5px;width:114.7px;height:1.4px;background:#4f9a30"></i><i style="left:803.4px;top:8.5px;width:57.4px;height:1.4px;background:#3a9a3a"></i><i style="left:874.7px;top:8.5px;width:1.3px;height:1.4px;background:#3a9a3a"></i><i style="left:889.5px;top:8.5px;width:28.7px;height:1.4px;background:#3a9a3a"></i><i style="left:918.2px;top:8.5px;width:57.4px;height:1.4px;background:#3a9a3a"></i><i style="left:114.9px;top:9.4px;width:28.7px;height:1.4px;background:#a04038"></i><i style="left:229.7px;top:9.4px;width:28.7px;height:1.4px;background:#a04038"></i><i style="left:774.7px;top:9.4px;width:28.7px;height:1.4px;background:#a04038"></i><i style="left:21.7px;top:10.3px;width:114.7px;height:1.4px;background:#e060d4"></i><i style="left:365.8px;top:10.3px;width:120.9px;height:1.4px;background:#e060d4"></i><i style="left:796.2px;top:10.3px;width:64.5px;height:1.4px;background:#e060d4"></i><i style="left:889.5px;top:10.3px;width:21.5px;height:1.4px;background:#e060d4"></i><i style="left:911.0px;top:10.3px;width:57.4px;height:1.4px;background:#e060d4"></i><i style="left:88.7px;top:11.2px;width:113.7px;height:1.4px;background:#5a2050"></i><i style="left:202.4px;top:11.2px;width:114.7px;height:1.4px;background:#5a2050"></i><i style="left:317.2px;top:11.2px;width:114.7px;height:1.4px;background:#5a2050"></i><i style="left:431.9px;top:11.2px;width:55.9px;height:1.4px;background:#5a2050"></i><i style="left:487.8px;top:11.2px;width:43.0px;height:1.4px;background:#5a2050"></i><i style="left:803.4px;top:11.2px;width:57.4px;height:1.4px;background:#5a2050"></i><i style="left:874.7px;top:11.2px;width:1.3px;height:1.4px;background:#5a2050"></i><i style="left:889.5px;top:11.2px;width:28.7px;height:1.4px;background:#5a2050"></i><i style="left:918.2px;top:11.2px;width:43.0px;height:1.4px;background:#5a2050"></i><i style="left:373.1px;top:12.1px;width:114.7px;height:1.4px;background:#c07838"></i><i style="left:487.8px;top:12.1px;width:57.4px;height:1.4px;background:#c07838"></i><i style="left:803.4px;top:12.1px;width:57.4px;height:1.4px;background:#c07838"></i><i style="left:889.5px;top:12.1px;width:28.7px;height:1.4px;background:#c07838"></i><i style="left:918.2px;top:12.1px;width:53.8px;height:1.4px;background:#c07838"></i><i style="left:258.4px;top:13.0px;width:114.7px;height:1.4px;background:#d898c8"></i><i style="left:373.1px;top:13.0px;width:114.7px;height:1.4px;background:#d898c8"></i><i style="left:487.8px;top:13.0px;width:28.0px;height:1.4px;background:#d898c8"></i><i style="left:545.2px;top:13.0px;width:114.7px;height:1.4px;background:#d898c8"></i><i style="left:660.0px;top:13.0px;width:114.7px;height:1.4px;background:#d898c8"></i><i style="left:803.4px;top:13.0px;width:57.4px;height:1.4px;background:#d898c8"></i><i style="left:874.7px;top:13.0px;width:1.3px;height:1.4px;background:#d898c8"></i><i style="left:885.2px;top:13.0px;width:1.7px;height:1.4px;background:#d898c8"></i><i style="left:889.5px;top:13.0px;width:28.7px;height:1.4px;background:#d898c8"></i><i style="left:918.2px;top:13.0px;width:57.4px;height:1.4px;background:#d898c8"></i><i style="left:28.9px;top:13.9px;width:57.4px;height:1.4px;background:#6a2a6a"></i><i style="left:86.2px;top:13.9px;width:57.4px;height:1.4px;background:#6a2a6a"></i><i style="left:545.2px;top:14.8px;width:114.7px;height:1.4px;background:#8030a0"></i><i style="left:660.0px;top:14.8px;width:114.7px;height:1.4px;background:#8030a0"></i><i style="left:803.4px;top:14.8px;width:57.4px;height:1.4px;background:#8030a0"></i><i style="left:874.7px;top:14.8px;width:1.3px;height:1.4px;background:#8030a0"></i><i style="left:889.5px;top:14.8px;width:28.7px;height:1.4px;background:#8030a0"></i><i style="left:918.2px;top:14.8px;width:57.4px;height:1.4px;background:#8030a0"></i><i style="left:595.9px;top:15.7px;width:113.9px;height:1.4px;background:#e07058"></i><i style="left:710.2px;top:15.7px;width:56.2px;height:1.4px;background:#e07058"></i><i style="left:373.1px;top:16.6px;width:57.4px;height:1.4px;background:#eee640"></i><i style="left:430.5px;top:16.6px;width:57.4px;height:1.4px;background:#eee640"></i><i style="left:487.8px;top:16.6px;width:57.4px;height:1.4px;background:#eee640"></i><i style="left:803.4px;top:16.6px;width:57.4px;height:1.4px;background:#eee640"></i><i style="left:859.9px;top:16.6px;width:2.2px;height:1.4px;background:#eee640"></i><i style="left:874.7px;top:16.6px;width:1.3px;height:1.4px;background:#eee640"></i><i style="left:885.2px;top:16.6px;width:2.2px;height:1.4px;background:#eee640"></i><i style="left:889.5px;top:16.6px;width:28.7px;height:1.4px;background:#eee640"></i><i style="left:918.2px;top:16.6px;width:57.4px;height:1.4px;background:#eee640"></i><i style="left:28.9px;top:17.5px;width:24.1px;height:1.4px;background:#c09828"></i><i style="left:143.6px;top:17.5px;width:24.1px;height:1.4px;background:#c09828"></i><i style="left:258.4px;top:17.5px;width:24.1px;height:1.4px;background:#c09828"></i><i style="left:373.1px;top:17.5px;width:24.1px;height:1.4px;background:#c09828"></i><i style="left:487.8px;top:17.5px;width:24.1px;height:1.4px;background:#c09828"></i><i style="left:545.2px;top:17.5px;width:24.1px;height:1.4px;background:#c09828"></i><i style="left:660.0px;top:17.5px;width:24.1px;height:1.4px;background:#c09828"></i><i style="left:717.3px;top:17.5px;width:24.1px;height:1.4px;background:#c09828"></i><i style="left:803.4px;top:17.5px;width:24.1px;height:1.4px;background:#c09828"></i><i style="left:918.2px;top:17.5px;width:24.1px;height:1.4px;background:#c09828"></i><i style="left:28.9px;top:18.4px;width:12.5px;height:1.4px;background:#c03030"></i><i style="left:545.2px;top:18.4px;width:12.5px;height:1.4px;background:#c03030"></i><i style="left:975.5px;top:18.4px;width:12.5px;height:1.4px;background:#c03030"></i><i style="left:10.8px;top:19.3px;width:57.6px;height:1.4px;background:#807080"></i><i style="left:534.0px;top:19.3px;width:57.6px;height:1.4px;background:#807080"></i><i style="left:784.3px;top:19.3px;width:57.6px;height:1.4px;background:#807080"></i><i style="left:975.6px;top:20.2px;width:48.9px;height:1.4px;background:#708880"></i><i style="left:0.9px;top:21.1px;width:51.9px;height:1.4px;background:#806874"></i><i style="left:774.8px;top:21.1px;width:52.4px;height:1.4px;background:#806874"></i><i style="left:199.4px;top:22.0px;width:25.8px;height:1.4px;background:#907888"></i><i style="left:658.5px;top:22.0px;width:25.8px;height:1.4px;background:#907888"></i><i style="left:0.2px;top:22.9px;width:28.7px;height:1.4px;background:#708c84"></i><i style="left:774.7px;top:22.9px;width:28.7px;height:1.4px;background:#708c84"></i><i style="left:258.4px;top:4.0px;width:258.2px;height:1.4px;background:#b04058"></i><i style="left:803.4px;top:4.0px;width:57.4px;height:1.4px;background:#b04058"></i><i style="left:889.5px;top:4.0px;width:57.4px;height:1.4px;background:#b04058"></i>
<b style="left:860px"></b><b style="left:874px"></b>
</div><div id="ovd"></div>
<div id="rsb"></div>
<div class="sbb2" style="left:1631px"><svg width="23" height="24" viewBox="0 0 23 24"><path d="M9 6.5l6 5.5-6 5.5" fill="none" stroke="#262d33" stroke-width="1.6"/></svg></div>
<div class="sbb2" style="left:1656px"><i class="dot" style="left:10px;top:9px"></i></div>
<div class="sbb2" style="left:1656px;top:158px;height:24px"><svg width="23" height="24" viewBox="0 0 23 24"><path d="M6 15l5.5-6 5.5 6" fill="none" stroke="#262d33" stroke-width="1.6"/></svg></div>
<div class="sbb2" style="left:1656px;top:183px;height:41px;background:#57626a"></div>
<div class="sbb2" style="left:1656px;top:972px;height:24px"><svg width="23" height="24" viewBox="0 0 23 24"><path d="M6 9l5.5 6 5.5-6" fill="none" stroke="#262d33" stroke-width="1.6"/></svg></div>
<div id="ruler">
<span class="rb" style="left:0.3px">1</span>
<span class="rs" style="left:33.2px">3</span>
<span class="rb" style="left:66.0px">5</span>
<span class="rs" style="left:98.9px">7</span>
<span class="rb" style="left:131.7px">9</span>
<span class="rs" style="left:164.6px">11</span>
<span class="rb" style="left:197.5px">13</span>
<span class="rs" style="left:230.3px">15</span>
<span class="rb" style="left:263.2px">17</span>
<span class="rs" style="left:296.0px">19</span>
<span class="rb" style="left:328.9px">21</span>
<span class="rs" style="left:361.8px">23</span>
<span class="rb" style="left:394.6px">25</span>
<span class="rs" style="left:427.5px">27</span>
<span class="rb" style="left:460.3px">29</span>
<span class="rs" style="left:493.2px">31</span>
<span class="rb" style="left:526.1px">33</span>
<span class="rs" style="left:558.9px">35</span>
<span class="rb" style="left:591.8px">37</span>
<span class="rs" style="left:624.6px">39</span>
<span class="rb" style="left:657.5px">41</span>
<span class="rs" style="left:690.4px">43</span>
<span class="rb" style="left:723.2px">45</span>
<span class="rs" style="left:756.1px">47</span>
<span class="rb" style="left:788.9px">49</span>
<span class="rs" style="left:821.8px">51</span>
<span class="rb" style="left:854.7px">53</span>
<span class="rs" style="left:887.5px">55</span>
<span class="rb" style="left:920.4px">57</span>
<span class="rs" style="left:953.2px">59</span>
<span class="rb" style="left:986.1px">61</span>
<span class="rs" style="left:1019.0px">63</span>
<span class="rb" style="left:1051.8px">65</span>
<span class="rs" style="left:1084.7px">67</span>
<span class="rb" style="left:1117.5px">69</span>
<span class="rs" style="left:1150.4px">71</span>
<span class="rb" style="left:1183.3px">73</span>
<span class="rs" style="left:1216.1px">75</span>
<span class="rb" style="left:1249.0px">77</span>
<span class="rs" style="left:1281.8px">79</span>
<svg class="abs" style="left:0;top:1px" width="16" height="16" viewBox="0 0 16 16"><path d="M0 0h14.5L.8 14H0z" fill="#b2e24a" stroke="#33440e" stroke-width=".9"/></svg>
</div>
</body></html>
